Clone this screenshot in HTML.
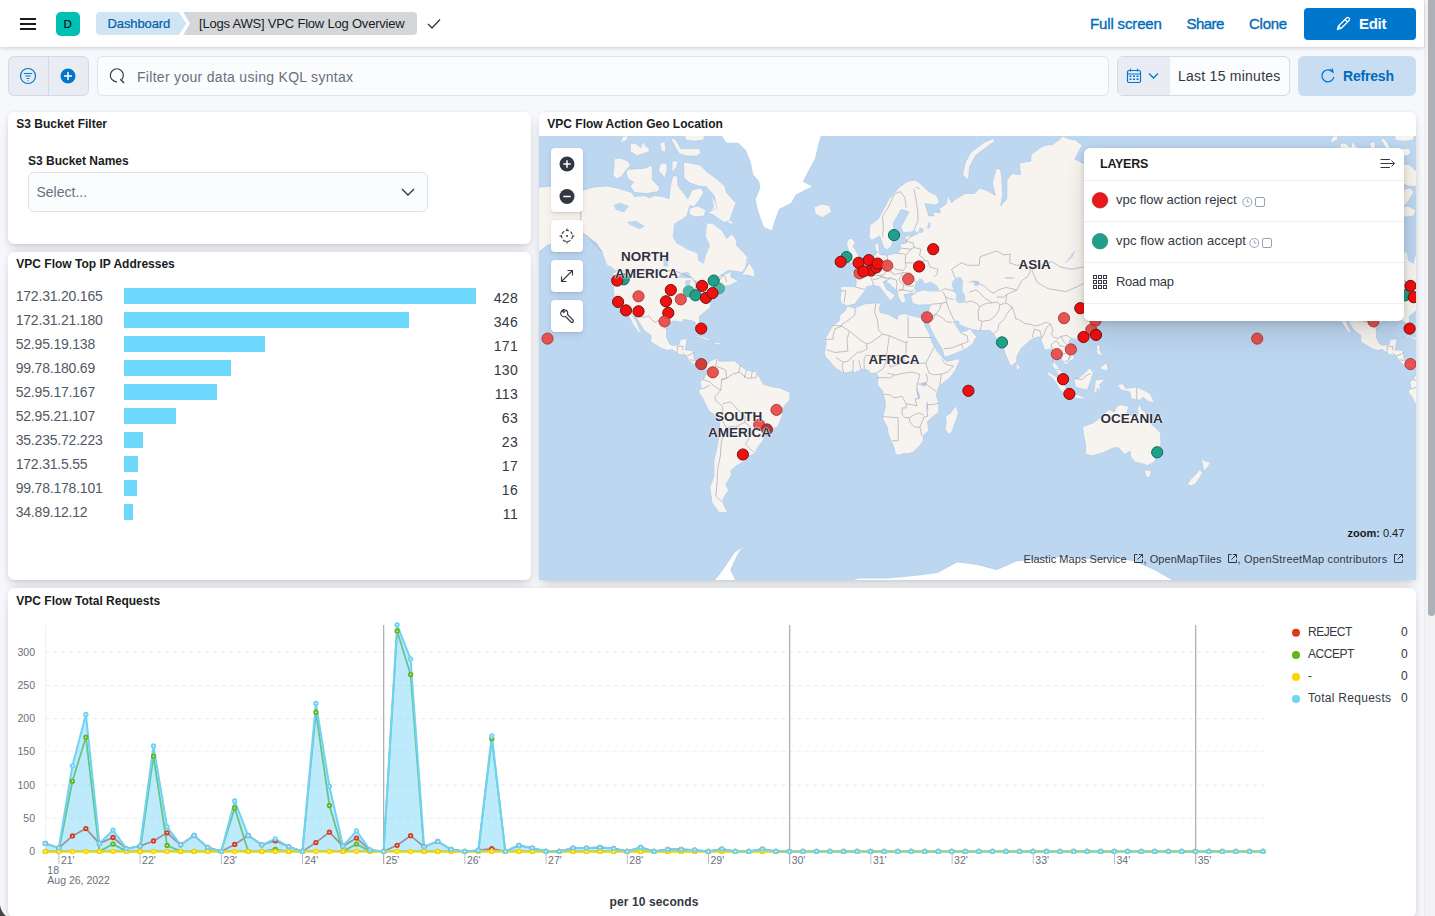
<!DOCTYPE html>
<html><head><meta charset="utf-8">
<style>
*{box-sizing:border-box;margin:0;padding:0}
html,body{width:1435px;height:916px;overflow:hidden;background:#f7f8fc;font-family:"Liberation Sans",sans-serif;color:#343741}
.abs{position:absolute}
.t{position:absolute;white-space:nowrap;line-height:1}
#hdr{position:absolute;left:0;top:0;width:1424px;height:47px;background:#fff;box-shadow:0 1px 3px rgba(0,0,0,.12),0 2px 6px rgba(0,0,0,.06);z-index:5}
.panel{position:absolute;background:#fff;border-radius:6px;box-shadow:0 0.9px 4px -1px rgba(0,0,0,.08),0 2.6px 8px -1px rgba(0,0,0,.06),0 5.7px 12px -1px rgba(0,0,0,.05),0 15px 15px -1px rgba(0,0,0,.04)}
.ptitle{position:absolute;left:8.3px;top:6.3px;font-size:12px;font-weight:700;color:#1a1c21;white-space:nowrap;line-height:1}
.btn{position:absolute;background:#fff;border-radius:4px;box-shadow:0 0.7px 1.4px rgba(0,0,0,.07),0 1.9px 4px rgba(0,0,0,.05),0 4.5px 10px rgba(0,0,0,.05)}
#scroll{position:absolute;left:1424px;top:0;width:11px;height:916px;background:#f3f3f5;border-left:1px solid #ececef}
#thumb{position:absolute;left:1428px;top:0;width:7px;height:616px;background:#abb0b9;border-radius:0 0 4px 4px}
</style></head><body>

<!-- ================= HEADER ================= -->
<div id="hdr">
  <!-- hamburger -->
  <div class="abs" style="left:20px;top:17.8px;width:16px;height:2.1px;background:#1a1c21"></div>
  <div class="abs" style="left:20px;top:22.9px;width:16px;height:2.1px;background:#1a1c21"></div>
  <div class="abs" style="left:20px;top:27.9px;width:16px;height:2.1px;background:#1a1c21"></div>
  <!-- avatar -->
  <div class="abs" style="left:56px;top:12px;width:24px;height:24px;border-radius:5px;background:#00bfb3"></div>
  <div class="t" style="left:63.6px;top:18.3px;font-size:11.6px;color:#000">D</div>
  <!-- breadcrumbs -->
  <svg class="abs" style="left:96px;top:12px" width="330" height="24">
    <path d="M4,0 H378 A4,4 0 0 1 382,4" fill="none"/>
    <path d="M87.2,0 H317 A4,4 0 0 1 321,4 V19 A4,4 0 0 1 317,23 H87.2 L94,11.5 Z" fill="#d4d6da"/>
    <path d="M4,0 H82.8 L90.4,11.5 L82.8,23 H4 A4,4 0 0 1 0,19 V4 A4,4 0 0 1 4,0 Z" fill="#cfe4f5"/>
  </svg>
  <div class="t" style="left:107.5px;top:17px;font-size:13px;color:#0061a6;letter-spacing:-0.1px;-webkit-text-stroke:0.2px #0061a6">Dashboard</div>
  <div class="t" style="left:199px;top:16.5px;font-size:13px;color:#1a1c21;letter-spacing:-0.2px">[Logs AWS] VPC Flow Log Overview</div>
  <svg class="abs" style="left:427px;top:18px" width="14" height="12"><path d="M1,6 L5,10 L13,1.5" fill="none" stroke="#343741" stroke-width="1.3"/></svg>
  <!-- right links -->
  <div class="t" style="left:1090px;top:15.8px;font-size:15px;color:#006bb8;letter-spacing:-0.15px;-webkit-text-stroke:0.35px #006bb8">Full screen</div>
  <div class="t" style="left:1186.5px;top:15.8px;font-size:15px;color:#006bb8;letter-spacing:-0.55px;-webkit-text-stroke:0.35px #006bb8">Share</div>
  <div class="t" style="left:1249px;top:15.8px;font-size:15px;color:#006bb8;letter-spacing:-0.25px;-webkit-text-stroke:0.35px #006bb8">Clone</div>
  <div class="abs" style="left:1304px;top:8px;width:112px;height:32px;border-radius:4px;background:#0077cc"></div>
  <svg class="abs" style="left:1335px;top:16px" width="16" height="16"><path d="M2.5,13.5 L3.5,10 L11.5,2 A1.6,1.6 0 0 1 14,4.5 L6,12.5 Z M10,3.5 L12.5,6 M4,10.5 L5.5,12" fill="none" stroke="#fff" stroke-width="1.3" stroke-linejoin="round"/></svg>
  <div class="t" style="left:1359px;top:15.8px;font-size:15px;color:#fff;font-weight:700;letter-spacing:-0.3px">Edit</div>
</div>

<!-- ================= QUERY BAR ================= -->
<div class="abs" style="left:8px;top:56px;width:81px;height:40px;border-radius:6px;background:#e9edf3;border:1px solid #d3dae6"></div>
<div class="abs" style="left:48px;top:56px;width:1px;height:40px;background:#d3dae6"></div>
<svg class="abs" style="left:19px;top:67px" width="18" height="18"><circle cx="9" cy="9" r="7.5" fill="none" stroke="#0077cc" stroke-width="1.2"/><path d="M4.8,6.5 H13.2 M6.2,9 H11.8 M7.6,11.5 H10.4 M8.6,13.6 H9.4" stroke="#0077cc" stroke-width="1.2"/></svg>
<svg class="abs" style="left:60px;top:68px" width="16" height="16"><circle cx="8" cy="8" r="7.5" fill="#0077cc"/><path d="M8,4 V12 M4,8 H12" stroke="#fff" stroke-width="1.5"/></svg>
<div class="abs" style="left:97px;top:56px;width:1012px;height:40px;border-radius:6px;background:#fbfcfd;border:1px solid #dfe3ea"></div>
<svg class="abs" style="left:108px;top:67px" width="18" height="18"><path d="M13.8,12.5 A6.5,6.5 0 1 0 9,14.8" fill="none" stroke="#343741" stroke-width="1.2"/><path d="M12.3,12.3 L16,16" stroke="#343741" stroke-width="1.3"/></svg>
<div class="t" style="left:137px;top:70px;font-size:14px;color:#69707d;letter-spacing:0.3px">Filter your data using KQL syntax</div>
<!-- date picker -->
<div class="abs" style="left:1117px;top:56px;width:173px;height:40px;border-radius:6px;background:#fbfcfd;border:1px solid #d3dae6;overflow:hidden"><div class="abs" style="left:0;top:0;width:52px;height:40px;background:#e9edf3"></div></div>
<svg class="abs" style="left:1126px;top:68px" width="16" height="16"><rect x="1.5" y="2.5" width="13" height="12" rx="1.5" fill="none" stroke="#0077cc" stroke-width="1.2"/><path d="M1.5,6 H14.5 M4.5,0.8 V3.5 M11.5,0.8 V3.5" stroke="#0077cc" stroke-width="1.2"/><g fill="#0077cc"><rect x="3.5" y="7.5" width="2" height="1.5"/><rect x="7" y="7.5" width="2" height="1.5"/><rect x="10.5" y="7.5" width="2" height="1.5"/><rect x="3.5" y="10.5" width="2" height="1.5"/><rect x="7" y="10.5" width="2" height="1.5"/><rect x="10.5" y="10.5" width="2" height="1.5"/></g></svg>
<svg class="abs" style="left:1148px;top:72px" width="12" height="8"><path d="M1,1.5 L5.5,6 L10,1.5" fill="none" stroke="#0077cc" stroke-width="1.3"/></svg>
<div class="t" style="left:1178px;top:69.2px;font-size:14px;color:#343741;letter-spacing:0.25px">Last 15 minutes</div>
<div class="abs" style="left:1298px;top:56px;width:118px;height:40px;border-radius:6px;background:#c8ddf2"></div>
<svg class="abs" style="left:1320px;top:68px" width="16" height="16"><path d="M12.5,4 A6,6 0 1 0 13.8,9" fill="none" stroke="#0077cc" stroke-width="1.3"/><path d="M9.5,1.5 L13,4 L12,0.5" fill="none" stroke="#0077cc" stroke-width="1.3"/></svg>
<div class="t" style="left:1343px;top:69.2px;font-size:14px;color:#006bb8;font-weight:700;letter-spacing:-0.2px">Refresh</div>

<!-- ================= S3 PANEL ================= -->
<div class="panel" style="left:8px;top:112px;width:523px;height:132px">
  <div class="ptitle">S3 Bucket Filter</div>
  <div class="t" style="left:20px;top:42.5px;font-size:12px;font-weight:700;color:#1a1c21">S3 Bucket Names</div>
  <div class="abs" style="left:20px;top:60px;width:400px;height:40px;border-radius:6px;background:#fbfcfd;border:1px solid #dfe3ea"></div>
  <div class="t" style="left:28.5px;top:73px;font-size:14px;color:#69707d">Select...</div>
  <svg class="abs" style="left:393px;top:76px" width="14" height="8"><path d="M1,1 L7,7 L13,1" fill="none" stroke="#343741" stroke-width="1.4"/></svg>
</div>

<!-- ================= IP PANEL ================= -->
<div class="panel" style="left:8px;top:252px;width:523px;height:328px">
  <div class="ptitle">VPC Flow Top IP Addresses</div>
  <div class="t" style="left:7.7px;top:36.85px;font-size:14px;color:#535966;letter-spacing:-0.2px">172.31.20.165</div>
<div class="abs" style="left:116px;top:36.20px;width:352.0px;height:15.7px;background:#6dd7fc"></div>
<div class="t" style="right:12.8px;top:39.15px;font-size:14px;color:#343741;letter-spacing:0.4px">428</div>
<div class="t" style="left:7.7px;top:60.85px;font-size:14px;color:#535966;letter-spacing:-0.2px">172.31.21.180</div>
<div class="abs" style="left:116px;top:60.20px;width:284.6px;height:15.7px;background:#6dd7fc"></div>
<div class="t" style="right:12.8px;top:63.15px;font-size:14px;color:#343741;letter-spacing:0.4px">346</div>
<div class="t" style="left:7.7px;top:84.85px;font-size:14px;color:#535966;letter-spacing:-0.2px">52.95.19.138</div>
<div class="abs" style="left:116px;top:84.20px;width:140.6px;height:15.7px;background:#6dd7fc"></div>
<div class="t" style="right:12.8px;top:87.15px;font-size:14px;color:#343741;letter-spacing:0.4px">171</div>
<div class="t" style="left:7.7px;top:108.85px;font-size:14px;color:#535966;letter-spacing:-0.2px">99.78.180.69</div>
<div class="abs" style="left:116px;top:108.20px;width:106.9px;height:15.7px;background:#6dd7fc"></div>
<div class="t" style="right:12.8px;top:111.15px;font-size:14px;color:#343741;letter-spacing:0.4px">130</div>
<div class="t" style="left:7.7px;top:132.85px;font-size:14px;color:#535966;letter-spacing:-0.2px">52.95.17.167</div>
<div class="abs" style="left:116px;top:132.20px;width:92.9px;height:15.7px;background:#6dd7fc"></div>
<div class="t" style="right:12.8px;top:135.15px;font-size:14px;color:#343741;letter-spacing:0.4px">113</div>
<div class="t" style="left:7.7px;top:156.85px;font-size:14px;color:#535966;letter-spacing:-0.2px">52.95.21.107</div>
<div class="abs" style="left:116px;top:156.20px;width:51.8px;height:15.7px;background:#6dd7fc"></div>
<div class="t" style="right:12.8px;top:159.15px;font-size:14px;color:#343741;letter-spacing:0.4px">63</div>
<div class="t" style="left:7.7px;top:180.85px;font-size:14px;color:#535966;letter-spacing:-0.2px">35.235.72.223</div>
<div class="abs" style="left:116px;top:180.20px;width:18.9px;height:15.7px;background:#6dd7fc"></div>
<div class="t" style="right:12.8px;top:183.15px;font-size:14px;color:#343741;letter-spacing:0.4px">23</div>
<div class="t" style="left:7.7px;top:204.85px;font-size:14px;color:#535966;letter-spacing:-0.2px">172.31.5.55</div>
<div class="abs" style="left:116px;top:204.20px;width:14.0px;height:15.7px;background:#6dd7fc"></div>
<div class="t" style="right:12.8px;top:207.15px;font-size:14px;color:#343741;letter-spacing:0.4px">17</div>
<div class="t" style="left:7.7px;top:228.85px;font-size:14px;color:#535966;letter-spacing:-0.2px">99.78.178.101</div>
<div class="abs" style="left:116px;top:228.20px;width:13.2px;height:15.7px;background:#6dd7fc"></div>
<div class="t" style="right:12.8px;top:231.15px;font-size:14px;color:#343741;letter-spacing:0.4px">16</div>
<div class="t" style="left:7.7px;top:252.85px;font-size:14px;color:#535966;letter-spacing:-0.2px">34.89.12.12</div>
<div class="abs" style="left:116px;top:252.20px;width:9.0px;height:15.7px;background:#6dd7fc"></div>
<div class="t" style="right:12.8px;top:255.15px;font-size:14px;color:#343741;letter-spacing:0.4px">11</div>
</div>

<!-- ================= MAP PANEL ================= -->
<div class="panel" style="left:539px;top:112px;width:877px;height:468px;overflow:hidden">
  <div class="ptitle">VPC Flow Action Geo Location</div>
</div>
<svg class="abs" style="left:539px;top:136px" width="877" height="444">
  <defs><clipPath id="mc"><path d="M0,0 H877 V444 H0 Z"/></clipPath></defs>
  <g clip-path="url(#mc)">
  <rect width="877" height="444" fill="#bdd7f0"/>
  <path d="M454.0,2.5L444.5,6.8L432.0,16.3L426.5,26.0L423.5,38.7L429.5,44.5L430.5,31.0L436.5,19.5L448.5,10.5L456.0,5.0ZM-59.0,64.0L0.0,51.2L12.0,50.0L42.0,54.8L54.0,51.2L67.3,50.0L79.8,52.3L92.4,56.4L95.5,60.6L105.9,59.6L110.1,61.7L115.4,59.6L123.7,60.6L130.0,62.7L131.5,49.0L134.0,39.7L138.4,40.0L139.0,50.0L142.5,54.4L148.8,62.7L153.0,54.0L161.0,52.0L173.0,60.0L183.0,76.0L197.4,89.9L197.4,109.5L206.2,118.3L209.4,122.6L207.3,130.3L207.4,122.3L210.0,125.5L203.4,136.3L189.6,134.2L179.8,140.7L192.6,135.4L191.6,140.7L199.5,145.0L189.6,149.7L181.8,150.5L181.8,155.4L173.9,158.5L170.9,171.8L160.1,180.5L161.6,194.0L159.1,194.6L156.1,186.2L152.2,184.4L144.3,183.5L143.3,186.2L134.4,184.8L127.9,189.6L127.5,201.5L130.5,207.8L133.4,209.5L140.3,208.5L141.3,203.6L148.2,202.6L146.3,214.0L154.1,214.4L155.5,224.6L163.0,227.4L167.2,229.0L168.9,228.2L170.9,225.2L178.8,221.4L179.8,225.2L185.7,225.2L195.6,224.8L199.5,228.2L207.4,234.1L217.2,236.1L221.2,242.4L224.1,248.0L233.0,250.9L240.9,251.9L250.8,256.5L250.8,263.8L243.9,271.9L242.9,281.1L238.9,290.5L234.6,292.6L225.1,299.1L224.1,304.7L219.2,310.4L215.3,317.4L211.3,319.8L206.4,318.6L207.4,324.6L197.5,329.6L191.6,334.8L192.6,338.8L186.7,348.4L189.6,354.2L183.7,363.3L185.1,369.7L188.7,376.4L179.8,376.4L172.9,366.5L170.9,351.3L174.9,340.1L174.9,324.6L178.8,308.1L181.2,283.1L169.9,274.9L163.0,260.8L159.5,255.9L162.0,250.9L161.0,246.0L164.4,243.0L167.0,239.1L167.4,231.2L166.0,231.2L162.0,231.6L155.1,229.2L150.8,225.2L147.2,220.1L139.4,218.1L133.4,213.6L128.5,214.4L122.6,212.4L111.7,205.7L112.1,199.4L104.8,194.0L97.0,181.0L93.4,179.8L97.9,186.2L102.9,198.9L98.9,195.5L94.0,188.4L89.5,179.3L88.7,177.7L86.1,174.6L82.0,173.2L78.2,165.6L74.9,158.8L74.3,151.9L75.3,142.8L73.9,136.6L77.2,136.3L73.3,131.8L67.4,128.7L63.4,117.3L57.5,106.7L49.6,101.9L43.7,98.0L31.9,94.4L21.0,100.3L16.1,106.7L8.2,109.3L0.3,115.6L-5.0,117.6L-25.3,115.6L-25.3,71.0ZM650.9,64.0L709.9,51.2L721.9,50.0L751.9,54.8L763.9,51.2L777.2,50.0L789.7,52.3L802.3,56.4L805.4,60.6L815.8,59.6L820.0,61.7L825.3,59.6L833.6,60.6L839.9,62.7L841.4,49.0L843.9,39.7L848.3,40.0L848.9,50.0L852.4,54.4L858.7,62.7L862.9,54.0L870.9,52.0L882.9,60.0L892.9,76.0L907.3,89.9L907.3,109.5L916.1,118.3L919.3,122.6L917.2,130.3L917.3,122.3L919.9,125.5L913.3,136.3L899.5,134.2L889.7,140.7L902.5,135.4L901.5,140.7L909.4,145.0L899.5,149.7L891.7,150.5L891.7,155.4L883.8,158.5L880.8,171.8L870.0,180.5L871.5,194.0L869.0,194.6L866.0,186.2L862.1,184.4L854.2,183.5L853.2,186.2L844.3,184.8L837.8,189.6L837.4,201.5L840.4,207.8L843.3,209.5L850.2,208.5L851.2,203.6L858.1,202.6L856.2,214.0L864.0,214.4L865.4,224.6L872.9,227.4L877.1,229.0L878.8,228.2L880.8,225.2L888.7,221.4L889.7,225.2L895.6,225.2L905.5,224.8L909.4,228.2L917.3,234.1L927.1,236.1L931.1,242.4L934.0,248.0L942.9,250.9L950.8,251.9L960.7,256.5L960.7,263.8L953.8,271.9L952.8,281.1L948.8,290.5L944.5,292.6L935.0,299.1L934.0,304.7L929.1,310.4L925.2,317.4L921.2,319.8L916.3,318.6L917.3,324.6L907.4,329.6L901.5,334.8L902.5,338.8L896.6,348.4L899.5,354.2L893.6,363.3L895.0,369.7L898.6,376.4L889.7,376.4L882.8,366.5L880.8,351.3L884.8,340.1L884.8,324.6L888.7,308.1L891.1,283.1L879.8,274.9L872.9,260.8L869.4,255.9L871.9,250.9L870.9,246.0L874.3,243.0L876.9,239.1L877.3,231.2L875.9,231.2L871.9,231.6L865.0,229.2L860.7,225.2L857.1,220.1L849.3,218.1L843.3,213.6L838.4,214.4L832.5,212.4L821.6,205.7L822.0,199.4L814.7,194.0L806.9,181.0L803.3,179.8L807.8,186.2L812.8,198.9L808.8,195.5L803.9,188.4L799.4,179.3L798.6,177.7L796.0,174.6L791.9,173.2L788.1,165.6L784.8,158.8L784.2,151.9L785.2,142.8L783.8,136.6L787.1,136.3L783.2,131.8L777.3,128.7L773.3,117.3L767.4,106.7L759.5,101.9L753.6,98.0L741.8,94.4L730.9,100.3L726.0,106.7L718.1,109.3L710.2,115.6L704.9,117.6L684.6,115.6L684.6,71.0ZM121.6,27.2L127.9,27.2L127.9,34.5L125.8,41.8L119.5,34.5ZM831.5,27.2L837.8,27.2L837.8,34.5L835.7,41.8L829.4,34.5ZM80.9,7.3L84.0,-0.0L89.2,-0.0L88.2,4.2ZM790.8,7.3L793.9,-0.0L799.1,-0.0L798.1,4.2ZM120.6,7.3L125.8,5.2L126.9,15.7L122.7,15.7ZM830.5,7.3L835.7,5.2L836.8,15.7L832.6,15.7ZM88.2,33.4L104.9,32.4L108.0,31.4L111.2,29.3L113.3,31.4L113.3,43.9L120.6,51.2L119.5,55.4L108.0,57.5L95.5,56.4L91.3,50.2L94.4,46.0L89.2,42.9L87.1,37.6ZM798.1,33.4L814.8,32.4L817.9,31.4L821.1,29.3L823.2,31.4L823.2,43.9L830.5,51.2L829.4,55.4L817.9,57.5L805.4,56.4L801.2,50.2L804.3,46.0L799.1,42.9L797.0,37.6ZM75.0,23.0L81.0,22.0L89.0,25.0L91.5,29.0L87.0,34.0L83.0,40.0L78.0,43.0L74.0,39.0L75.0,31.0ZM784.9,23.0L790.9,22.0L798.9,25.0L801.4,29.0L796.9,34.0L792.9,40.0L787.9,43.0L783.9,39.0L784.9,31.0ZM144.6,-6.0L165.5,-6.0L165.5,-0.0L164.5,4.2L155.1,5.2L146.7,4.2ZM854.5,-6.0L875.4,-6.0L875.4,-0.0L874.4,4.2L865.0,5.2L856.6,4.2ZM134.2,2.1L138.4,6.3L141.5,12.5L151.9,12.5L160.3,12.5L161.9,16.7L158.2,19.9L147.8,19.9L140.4,17.8L136.3,11.5L132.1,3.1ZM844.1,2.1L848.3,6.3L851.4,12.5L861.8,12.5L870.2,12.5L871.8,16.7L868.1,19.9L857.7,19.9L850.3,17.8L846.2,11.5L842.0,3.1ZM133.1,25.1L139.4,25.1L137.3,31.4L133.1,36.6ZM843.0,25.1L849.3,25.1L847.2,31.4L843.0,36.6ZM91.3,7.3L96.5,7.3L101.8,11.5L103.9,5.2L107.0,10.5L110.1,11.5L110.1,15.7L103.9,17.8L97.6,19.9L95.5,17.8L91.3,15.7ZM801.2,7.3L806.4,7.3L811.7,11.5L813.8,5.2L816.9,10.5L820.0,11.5L820.0,15.7L813.8,17.8L807.5,19.9L805.4,17.8L801.2,15.7ZM275.1,70.9L283.0,68.0L290.7,69.7L292.5,75.7L283.5,81.7L276.3,78.1ZM301.1,163.1L302.4,167.4L308.0,169.8L315.8,168.1L319.8,162.4L326.1,154.6L327.7,150.5L334.6,149.7L340.5,150.5L344.4,155.9L351.3,164.9L356.3,159.3L347.4,153.2L344.0,145.6L347.0,145.0L358.2,155.1L359.2,161.1L363.2,167.4L367.1,164.9L364.7,158.5L371.1,157.7L377.0,156.7L371.7,160.3L373.6,167.4L379.9,169.1L390.8,168.6L390.4,173.4L387.4,181.0L388.6,185.1L391.8,192.9L396.7,202.6L403.6,214.0L405.2,221.0L408.5,220.5L422.3,215.1L428.2,212.0L433.2,208.2L437.7,200.4L435.1,198.1L430.8,192.2L428.2,194.6L421.3,196.1L418.4,191.8L414.4,185.1L419.4,185.1L420.4,188.4L426.3,191.3L432.2,193.3L441.1,194.6L450.9,194.4L454.9,198.3L457.8,203.6L463.3,207.8L465.7,216.1L470.6,228.2L472.6,230.0L477.5,226.2L477.9,220.1L482.5,212.0L490.4,205.1L495.3,201.9L500.8,200.7L505.7,214.0L512.4,213.0L514.0,221.2L513.6,230.2L517.6,235.1L519.9,240.5L523.9,243.4L525.3,242.1L523.7,237.1L521.3,233.8L518.0,229.2L515.4,226.2L517.2,219.3L521.9,221.8L523.9,225.0L526.8,229.0L530.2,225.6L535.1,222.8L534.7,215.1L529.8,209.9L530.0,204.5L533.4,202.4L537.7,203.6L543.6,200.9L550.5,198.1L555.4,192.9L560.2,184.4L558.4,179.8L556.8,173.4L555.4,167.1L561.4,166.4L553.5,163.6L552.1,162.4L559.4,157.7L559.0,162.4L564.9,160.1L566.7,164.9L569.2,172.2L569.0,173.7L574.8,171.5L575.2,167.4L573.2,163.4L571.2,160.3L575.6,157.2L577.5,153.8L582.1,152.4L587.0,149.7L596.8,136.3L598.6,124.9L596.5,120.7L590.9,119.0L586.4,116.6L596.8,103.7L601.8,99.9L617.6,99.9L624.5,100.3L628.8,91.1L635.3,91.1L629.4,105.6L626.4,115.6L628.8,128.7L632.3,122.3L635.3,117.3L639.2,111.4L641.8,104.9L644.8,98.0L655.0,97.2L659.9,93.2L668.8,86.9L672.8,87.8L672.8,76.7L674.7,75.8L674.7,55.6L655.0,49.9L635.3,51.6L619.5,44.6L595.9,34.6L576.1,44.0L572.2,32.6L556.4,31.2L542.6,26.4L544.2,27.2L535.8,23.0L543.2,9.4L536.9,4.2L530.6,3.1L523.3,-0.0L521.2,3.1L513.9,8.4L505.5,9.4L500.3,12.5L491.9,18.8L491.9,25.1L480.4,27.2L481.5,38.7L473.1,37.6L467.9,43.9L467.9,62.7L461.6,70.0L463.7,58.5L462.7,41.8L461.6,33.4L457.4,32.4L453.3,47.0L456.4,59.6L448.0,54.4L440.7,52.3L435.5,57.5L426.1,57.5L415.6,63.8L412.7,66.9L408.9,59.3L407.3,67.7L404.3,70.0L400.5,72.3L401.2,76.8L393.6,76.1L395.1,79.9L389.8,79.9L385.9,67.7L397.4,69.2L400.5,65.4L397.4,59.3L389.8,55.5L380.6,47.1L376.0,44.0L368.4,45.5L360.7,50.9L350.0,63.1L339.3,83.0L330.9,89.1L330.0,101.1L332.8,104.5L340.5,99.9L341.9,103.0L344.8,111.4L348.0,113.9L352.3,110.3L355.3,99.9L354.3,86.9L362.2,73.4L370.1,75.8L361.8,91.1L364.2,96.4L369.1,96.4L376.0,95.2L379.3,97.6L375.0,99.2L366.1,100.3L367.7,106.7L361.2,108.5L361.2,113.9L358.2,117.6L356.5,117.3L348.4,119.0L341.5,119.0L340.5,117.3L339.3,106.3L335.8,109.3L336.6,113.9L337.1,118.6L333.6,120.7L329.6,122.3L327.7,127.1L324.7,128.4L322.9,131.2L317.2,132.7L316.2,136.0L310.5,136.6L315.5,140.5L317.4,145.0L316.8,150.5L311.9,150.8L304.0,150.0L301.4,151.9L302.4,155.1ZM674.7,75.8L678.7,73.4L690.5,78.1L694.9,70.6L686.6,66.1L674.7,56.1ZM308.5,131.5L322.5,128.1L323.1,123.3L320.2,120.7L317.4,115.9L315.8,112.5L313.9,110.7L316.2,106.7L312.9,102.6L309.9,102.6L307.6,106.7L308.7,112.1L310.3,116.3L313.9,119.0L310.5,121.3L311.5,124.6L309.5,126.5L313.9,128.1ZM308.0,124.9L307.6,120.7L308.9,117.0L305.0,114.9L300.1,118.3L301.1,122.3L299.5,126.2L304.0,126.8ZM308.2,170.3L315.8,172.0L325.7,167.9L339.5,166.9L341.5,167.9L340.1,173.4L341.5,176.5L349.4,178.4L358.2,183.3L359.6,178.9L365.1,177.7L378.8,181.2L383.9,181.2L384.1,184.2L386.4,190.7L390.4,197.7L393.1,206.8L395.7,210.3L397.7,215.1L402.0,219.5L405.0,223.2L407.5,225.4L420.8,222.6L420.4,225.4L416.4,234.1L411.5,241.1L402.6,248.0L399.1,251.9L397.3,259.4L399.7,266.8L399.8,275.9L392.6,281.7L388.4,285.8L389.8,294.8L384.5,299.1L383.9,305.8L379.9,310.4L374.0,316.2L370.1,317.4L363.2,317.8L359.2,319.3L356.1,317.8L355.3,312.7L352.3,304.9L349.4,299.1L348.4,291.6L343.5,282.1L346.6,269.8L345.8,263.4L344.0,257.9L343.1,253.9L338.5,249.0L339.1,240.1L337.9,238.1L336.6,237.1L331.6,237.5L329.6,234.5L326.5,233.4L322.7,233.8L315.8,236.5L311.9,235.7L305.0,237.3L297.1,232.4L293.8,229.2L290.2,224.6L286.7,221.2L285.3,216.7L287.3,206.8L286.3,203.0L290.6,195.1L294.2,189.3L300.5,184.4L300.9,179.3L306.4,174.6ZM417.0,269.8L419.4,276.9L417.4,283.1L414.4,291.6L412.5,296.9L408.9,298.0L406.0,292.6L407.3,286.3L406.6,280.0L411.1,277.6L414.4,272.9ZM477.3,226.6L481.3,231.2L478.7,234.3L477.2,233.2ZM577.1,181.6L579.7,175.8L586.0,175.8L589.6,173.9L595.5,172.2L597.4,170.5L597.8,164.1L599.8,161.1L598.8,156.2L595.9,157.7L595.5,163.6L589.9,167.4L588.0,170.5L582.1,171.0L578.1,173.4L575.7,176.3ZM595.9,155.9L599.4,153.2L606.7,151.1L606.1,148.4L599.4,145.3L598.4,151.1L595.9,153.2ZM599.8,143.6L602.8,141.9L602.2,134.8L604.7,134.8L601.8,119.0L599.8,118.3L599.4,128.7L599.8,140.7ZM556.6,199.4L558.4,194.4L560.4,195.1L558.0,201.7ZM557.4,208.9L561.0,208.9L560.8,214.0L564.3,220.1L558.4,218.5L557.6,216.1ZM560.4,232.2L567.3,226.6L569.2,232.2L567.3,234.9ZM534.7,243.0L536.7,251.5L548.5,253.9L551.5,245.0L554.5,236.1L550.5,232.2L546.6,236.1L542.6,239.7L538.7,242.8ZM507.7,234.9L513.0,238.1L519.9,243.0L525.9,249.6L528.8,257.7L525.9,257.7L520.9,253.9L517.6,248.0L514.0,242.6L509.1,239.1ZM527.2,259.4L529.8,257.9L538.7,258.8L545.6,261.4L545.2,263.2L532.8,261.4L527.8,259.6ZM554.5,256.9L557.4,256.9L558.4,251.9L562.3,254.9L560.4,249.0L566.3,243.0L556.4,244.0L555.4,252.9ZM578.1,248.4L584.0,247.8L587.0,252.5L597.8,251.1L607.3,255.5L611.2,257.9L615.6,266.8L609.7,265.8L603.7,261.2L601.8,263.8L597.8,264.0L591.9,262.6L590.9,255.9L582.1,253.9L580.1,251.3ZM543.6,290.5L544.6,299.1L546.6,308.1L546.6,318.1L552.5,319.8L563.3,317.1L574.2,312.0L579.1,311.5L586.0,318.6L590.9,315.0L591.9,321.2L595.9,325.9L603.7,327.9L608.3,329.6L615.6,325.9L617.9,317.1L621.9,308.1L621.5,296.9L617.2,292.6L608.3,284.2L606.5,275.9L602.8,273.9L600.8,267.2L598.8,271.9L599.0,279.0L594.9,281.1L588.0,276.9L589.6,270.2L581.1,268.8L577.1,270.8L575.2,275.9L569.8,273.5L564.3,279.0L560.8,282.1L554.1,286.9L545.8,290.1ZM605.1,334.0L612.2,334.5L611.6,340.6L607.7,341.5ZM660.3,318.3L664.5,324.4L671.8,326.4L668.8,330.9L664.5,335.6L663.9,329.6L661.9,321.7ZM660.5,333.5L663.5,336.6L660.5,342.3L656.2,348.1L652.1,350.1L648.1,348.4L652.1,342.8L658.0,336.9ZM152.6,201.7L159.1,199.2L167.0,201.7L173.5,205.3L167.0,204.1L160.1,200.7ZM862.5,201.7L869.0,199.2L876.9,201.7L883.4,205.3L876.9,204.1L870.0,200.7ZM174.3,207.6L176.8,206.2L183.7,207.2L179.8,209.1ZM202.9,139.0L210.3,126.8L215.3,134.8L215.9,141.6L209.4,139.3Z" fill="#f7f4f0" stroke="#a9c8ea" stroke-width="0.6" fill-rule="nonzero"/>
  <path d="M377.0,156.7L375.0,151.9L376.4,147.8L378.4,145.9L380.3,142.2L383.9,143.6L385.8,147.8L391.8,145.6L394.3,147.3L397.7,149.2L401.6,155.6L390.8,155.4L384.9,154.6ZM412.5,146.4L416.4,142.2L421.3,140.7L424.3,145.0L423.3,154.6L426.3,159.8L426.1,166.6L419.4,167.4L416.4,163.6L417.4,159.0L413.9,153.2ZM138.2,141.6L144.3,136.3L149.2,136.0L153.2,141.9L148.2,142.2ZM848.1,141.6L854.2,136.3L859.1,136.0L863.1,141.9L858.1,142.2ZM146.7,155.4L148.2,155.4L150.2,149.2L152.2,143.9L146.3,144.2ZM856.6,155.4L858.1,155.4L860.1,149.2L862.1,143.9L856.2,144.2ZM153.2,143.6L162.0,146.4L158.7,151.4L157.1,151.4L155.5,146.4ZM863.1,143.6L871.9,146.4L868.6,151.4L867.0,151.4L865.4,146.4ZM155.1,155.4L164.2,152.4L160.1,153.8ZM865.0,155.4L874.1,152.4L870.0,153.8ZM162.4,151.1L169.5,149.2L168.9,151.1ZM872.3,151.1L879.4,149.2L878.8,151.1ZM524.9,127.1L528.8,123.9L534.7,115.6L536.3,113.9L533.7,120.7L527.8,126.2ZM464.7,142.2L467.7,142.8L473.6,143.0L476.6,141.3L471.6,141.3L466.7,141.0ZM435.1,145.0L440.1,145.0L440.1,149.2L436.1,150.5L434.2,147.8ZM382.9,246.4L386.8,246.0L387.8,248.0L385.8,250.9L382.5,249.9L382.1,248.0ZM377.4,252.9L378.2,252.9L380.9,258.8L381.3,262.8L380.1,262.8L378.0,257.9ZM387.8,264.8L388.8,265.8L389.4,274.5L388.4,274.3L387.0,268.8ZM378.9,97.2L380.9,91.1L384.9,93.2L383.9,96.4ZM387.8,92.4L389.8,85.7L391.8,86.9L390.8,92.4ZM124.6,130.3L129.5,130.3L127.5,119.7L124.6,122.3ZM834.5,130.3L839.4,130.3L837.4,119.7L834.5,122.3ZM150.5,69.1L147.2,80.0L135.2,87.7L133.6,100.8L137.4,107.3L149.4,113.9L158.1,117.2L159.2,124.8L164.7,128.1L166.9,119.3L171.2,109.5L166.9,100.8L168.0,87.7L173.4,87.7L182.1,94.2L187.6,103.0L193.1,98.6L197.4,105.1L221.0,105.0L221.0,79.0L192.0,87.7L184.3,83.3L177.8,78.0L171.0,78.0L175.0,70.0L172.3,54.9L167.0,51.0L162.0,51.0L164.0,57.0L159.0,65.0L155.0,70.0ZM860.4,69.1L857.1,80.0L845.1,87.7L843.5,100.8L847.3,107.3L859.3,113.9L868.0,117.2L869.1,124.8L874.6,128.1L876.8,119.3L881.1,109.5L876.8,100.8L877.9,87.7L883.3,87.7L892.0,94.2L897.5,103.0L903.0,98.6L907.3,105.1L930.9,105.0L930.9,79.0L901.9,87.7L894.2,83.3L887.7,78.0L880.9,78.0L884.9,70.0L882.2,54.9L876.9,51.0L871.9,51.0L873.9,57.0L868.9,65.0L864.9,70.0ZM74.5,69.0L81.0,66.8L90.0,70.0L85.0,76.4L77.0,74.0ZM784.4,69.0L790.9,66.8L799.9,70.0L794.9,76.4L786.9,74.0ZM87.7,86.0L97.0,84.8L105.7,90.0L101.0,93.2L91.0,89.0ZM797.6,86.0L806.9,84.8L815.6,90.0L810.9,93.2L800.9,89.0Z" fill="#bdd7f0"/>
  <path d="M144.6,26.0L161.0,29.0L168.2,36.0L176.6,42.0L186.2,50.4L187.4,56.4L197.0,67.3L194.6,73.3L191.0,84.1L185.0,86.5L173.0,78.1L168.2,76.9L177.8,72.1L175.4,60.0L167.0,50.4L161.0,50.4L151.0,47.0L145.0,42.0ZM854.5,26.0L870.9,29.0L878.1,36.0L886.5,42.0L896.1,50.4L897.3,56.4L906.9,67.3L904.5,73.3L900.9,84.1L894.9,86.5L882.9,78.1L878.1,76.9L887.7,72.1L885.3,60.0L876.9,50.4L870.9,50.4L860.9,47.0L854.9,42.0ZM151.0,72.0L159.0,70.0L167.0,74.0L165.0,80.0L156.0,81.0L150.0,78.0ZM860.9,72.0L868.9,70.0L876.9,74.0L874.9,80.0L865.9,81.0L859.9,78.0Z" fill="#f7f4f0" stroke="#a9c8ea" stroke-width="0.6"/>
  <path d="M182.6,-6.0L182.6,-0.0L187.4,7.2L199.4,7.2L206.6,14.4L211.4,26.4L213.8,38.4L219.8,45.6L221.0,51.6L216.2,63.6L218.6,74.5L224.6,91.3L233.0,94.9L235.5,86.5L240.3,73.3L252.3,67.3L257.1,58.8L273.9,50.4L264.3,45.6L269.1,36.0L276.3,22.8L279.9,7.2L282.3,-0.0L282.3,-6.0ZM-35.2,579.2L-35.2,500.5L4.3,491.4L24.0,483.0L43.7,475.1L83.2,464.2L122.6,460.8L162.0,460.8L181.8,436.4L195.6,416.2L207.4,408.5L201.5,413.9L197.5,421.0L191.6,433.7L201.5,454.2L231.1,500.5L260.6,500.5L280.4,460.8L300.1,448.0L319.8,442.1L349.4,442.1L378.9,439.2L398.7,436.4L418.4,425.9L438.1,428.5L457.8,433.7L477.5,424.9L497.3,423.4L517.0,421.0L536.7,421.0L556.4,423.4L576.1,421.9L595.9,424.9L615.6,433.7L635.3,445.0L655.0,451.1L674.7,500.5L674.7,579.2ZM674.7,579.2L674.7,500.5L714.2,491.4L733.9,483.0L753.6,475.1L793.1,464.2L832.5,460.8L871.9,460.8L891.7,436.4L905.5,416.2L917.3,408.5L911.4,413.9L907.4,421.0L901.5,433.7L911.4,454.2L941.0,500.5L970.5,500.5L990.3,460.8L1010.0,448.0L1029.7,442.1L1059.3,442.1L1088.8,439.2L1108.6,436.4L1128.3,425.9L1148.0,428.5L1167.7,433.7L1187.4,424.9L1207.2,423.4L1226.9,421.0L1246.6,421.0L1266.3,423.4L1286.0,421.9L1305.8,424.9L1325.5,433.7L1345.2,445.0L1364.9,451.1L1384.6,500.5L1384.6,579.2Z" fill="#ffffff" stroke="#a9c8ea" stroke-width="0.6"/>
  <path d="M76.6,134.8L132.1,134.8L132.5,133.6L143.1,137.8L153.2,142.2L157.3,146.4L156.1,154.6L164.0,151.9L168.9,148.6L172.9,146.4L178.8,146.4L181.8,142.2L183.7,139.3L186.1,140.7L187.7,146.4M786.5,134.8L842.0,134.8L842.4,133.6L853.0,137.8L863.1,142.2L867.2,146.4L866.0,154.6L873.9,151.9L878.8,148.6L882.8,146.4L888.7,146.4L891.7,142.2L893.6,139.3L896.0,140.7L897.6,146.4M41.7,52.2L41.7,96.0L49.6,101.1L57.5,110.3L63.4,115.6M751.6,52.2L751.6,96.0L759.5,101.1L767.4,110.3L773.3,115.6M88.9,178.2L93.6,177.7L100.9,181.0L106.4,181.0L109.8,179.8L113.7,184.8L116.7,186.2L119.8,184.4L123.6,189.6L128.1,193.1M798.8,178.2L803.5,177.7L810.8,181.0L816.3,181.0L819.7,179.8L823.6,184.8L826.6,186.2L829.7,184.4L833.5,189.6L838.0,193.1M138.0,217.1L138.4,210.3L143.9,210.3L143.9,214.2M847.9,217.1L848.3,210.3L853.8,210.3L853.8,214.2M143.7,217.3L146.7,219.3M853.6,217.3L856.6,219.3M147.2,220.1L152.2,218.1L155.7,216.1M857.1,220.1L862.1,218.1L865.6,216.1M150.8,223.8L154.7,224.4M860.7,223.8L864.6,224.4M156.1,229.2L156.3,227.0M866.0,229.2L866.2,227.0M177.8,222.6L176.8,230.2L186.7,233.8L187.7,242.1L181.8,243.4M164.0,243.4L170.9,246.0L174.9,249.9L181.8,254.3M873.9,243.4L880.8,246.0L884.8,249.9L891.7,254.3M201.5,229.2L199.5,236.1M207.4,234.5L205.4,242.1M213.3,234.7L212.3,241.5M181.8,254.3L182.7,244.0L187.7,242.1L193.6,238.1L200.5,236.1L208.4,242.3L217.2,241.7L218.0,237.7M161.4,252.7L166.0,251.9L170.9,249.0M871.3,252.7L875.9,251.9L880.8,249.0M181.8,254.3L175.8,260.8L176.8,264.8L180.8,267.8L183.7,270.8L183.7,276.9L182.5,281.1M182.5,281.1L184.7,287.3L187.7,292.2L191.6,290.5L196.5,290.9L205.4,286.3L206.4,281.1L200.9,275.9L191.6,265.8L183.7,267.8M187.7,292.2L184.7,295.9L182.1,308.1L181.4,319.8L178.8,332.2L178.2,345.6L176.8,360.2L183.7,366.5M196.5,290.9L205.4,295.9L212.3,299.1L212.3,294.8L211.3,290.5L205.4,286.3M212.3,299.1L206.4,308.1L214.3,316.2M316.4,172.2L315.8,179.3L309.9,183.9L302.6,188.4L302.6,190.0L294.2,189.1M286.3,203.6L294.2,203.0L294.2,199.4L296.1,192.9L302.6,190.0L310.3,195.1L308.0,203.6L308.9,215.1L296.1,216.5L287.3,213.6M310.3,195.1L322.2,204.7L327.7,207.8L331.6,206.8L343.5,198.3M336.6,167.6L335.6,177.0L338.5,183.9L339.5,194.0L343.5,198.3M369.1,180.3L369.1,201.5L392.8,201.5M343.5,198.3L349.4,199.4L367.1,206.8L367.1,205.7L369.1,205.7M327.7,207.8L328.1,213.0L321.8,216.1L318.8,216.1L308.9,225.2L304.0,226.2L297.1,221.6M325.1,222.8L326.9,219.1L333.6,220.1L339.5,219.5L346.6,218.9L348.4,220.1M348.4,221.2L345.4,230.2L343.5,233.2L337.5,237.1M325.1,233.6L325.1,222.8M322.2,234.1L319.8,224.2M313.9,236.1L314.3,224.2M305.0,237.3L303.0,231.2L304.0,226.2M350.4,199.4L347.4,220.1L350.4,226.6L351.3,231.0L362.2,227.2L364.2,224.2L367.1,216.1L367.1,206.8M363.2,224.2L374.0,227.2L386.8,227.2L389.8,236.9M391.8,217.5L386.8,227.2M391.8,217.5L395.7,209.9M348.4,237.1L356.3,239.1L364.2,237.1L374.0,236.1L380.9,238.5M338.5,241.7L346.4,241.7L351.3,242.1L355.3,239.1M343.8,257.9L351.3,259.0L354.9,261.8L363.2,260.4L367.1,267.8L367.1,271.9L363.2,271.9L363.2,279.0M376.0,262.8L378.0,269.8L373.0,268.8L367.1,267.8M380.9,238.5L378.0,248.6L378.0,254.9L379.9,262.8L376.0,262.8M386.8,236.9L388.8,243.0L386.8,248.0L393.7,252.9L397.1,255.3M378.9,248.0L386.8,248.0M402.6,223.2L406.6,228.2L414.4,230.2L408.5,236.1L402.4,238.1L400.6,249.4M389.8,236.9L394.7,238.9L402.4,238.1M399.7,266.8L394.7,268.4L388.8,268.8L387.8,273.9L388.8,280.0L384.9,281.1L380.9,291.3M363.2,279.0L366.1,281.7L370.1,281.7L375.0,279.0L379.9,276.9L384.9,279.0M359.2,281.7L359.2,290.5L359.2,296.9L359.2,304.7L353.3,304.7M370.1,281.7L371.1,286.3L375.0,290.9L380.9,291.3L382.9,300.2M343.1,280.6L359.2,281.7M302.2,154.8L307.0,154.8L306.2,159.8L305.0,166.9M316.2,151.1L326.1,153.5M324.7,128.7L328.1,132.1L332.4,133.3L336.0,134.8L334.8,139.0L331.6,143.0L333.6,145.6L334.6,149.7M331.6,128.7L333.6,124.6L334.0,121.3M336.7,115.9L339.3,116.3M347.8,119.0L348.6,123.6L349.4,128.7L344.4,130.6L347.0,135.4L345.0,138.7L339.5,139.6L334.8,139.0M349.4,128.7L354.3,130.9L357.3,133.3L364.2,134.5M364.2,134.5L367.1,130.3L366.1,125.5L366.7,119.3L364.6,117.6L358.2,117.6M361.2,112.1L372.0,113.2L375.0,111.4L374.0,106.7L372.0,106.7L367.1,104.9L374.0,99.2M366.7,119.3L372.0,113.2M366.1,126.8L379.9,127.1L382.9,125.5L385.8,124.6L388.8,124.9L390.8,130.9L394.7,132.1L398.7,133.3L398.1,138.4L395.3,140.5M375.0,111.4L381.9,113.2L380.5,119.7L383.9,121.6L385.8,124.6M347.0,135.4L353.3,136.0L353.7,137.8L356.3,138.4L364.2,136.6M352.3,142.2L346.8,142.2L343.5,140.7L339.5,139.6M364.2,136.6L372.0,137.2L375.4,142.2L376.0,145.9L378.4,145.9M364.2,136.6L359.8,143.3L362.2,147.0L364.6,148.6L369.1,150.0L375.0,150.0M359.2,155.1L364.0,153.8L371.1,155.4L375.0,154.6M371.7,156.7L371.1,158.0M346.6,145.0L351.3,142.2L357.3,143.9L358.0,147.8L357.3,151.9L358.0,154.8M360.2,153.2L364.0,153.8L364.6,148.6M333.4,143.9L340.5,142.2L343.5,140.7L346.8,142.2M343.5,101.1L344.4,91.1L343.5,80.4L349.4,71.0L355.3,58.3L361.2,55.6M367.1,72.0L366.1,62.0L361.2,55.6M375.0,52.8L377.0,63.5L378.9,75.8L378.9,84.8L374.6,95.2M376.6,51.1L380.9,52.8M390.8,169.8L393.7,168.1L402.6,167.4L407.5,166.1L406.6,161.1M402.6,167.4L400.6,173.4L396.7,178.2L392.8,180.5L389.8,180.5M388.8,185.1L393.7,183.9L396.7,178.2M396.7,178.2L402.6,181.4L407.9,185.8L413.5,186.2M407.5,166.1L409.5,172.2L411.5,177.0L414.4,182.8L415.0,184.2M404.6,212.6L412.5,212.0L423.3,207.8L429.2,205.7L428.2,200.0L422.3,197.2L421.3,196.8M422.3,207.8L424.3,212.8M401.6,155.6L405.6,152.7L414.4,154.8L416.4,155.9M404.2,155.9L406.6,161.1L410.5,162.6L414.4,163.6M426.1,166.6L432.2,164.9L439.1,168.3L440.5,170.8L439.1,175.8L439.7,184.2L443.0,185.3L441.3,194.6M443.0,185.3L450.9,184.2L456.4,179.6L459.8,174.6L460.8,168.6L466.7,167.4M440.5,170.8L447.0,167.4L453.5,166.9L457.8,165.9L460.8,168.6M454.3,197.9L458.8,194.0L459.8,188.4L465.7,182.8L467.7,178.2L473.2,171.0M473.2,171.0L475.6,178.2L476.6,182.8L479.7,183.5L485.4,187.3L493.3,188.9L494.9,190.0L501.2,188.9L507.1,186.2L511.7,188.0M493.3,201.5L495.3,192.9L501.2,195.1L502.4,202.6M502.4,202.6L505.2,197.7L507.5,191.6L511.7,188.0M511.7,188.0L514.0,195.1L512.1,197.7L515.0,201.5L519.0,202.6L521.9,200.4L527.8,199.4L532.8,202.6M514.0,226.2L515.0,218.1L513.4,213.0L512.1,208.9L516.0,205.3L518.0,204.9M518.0,204.9L520.9,209.9L526.3,210.9L527.8,217.1L521.9,218.1L521.9,222.2M521.9,200.4L524.9,205.7L529.8,210.9L531.8,216.1L529.2,224.4M527.8,217.1L531.8,220.1L528.8,225.2L525.9,225.4M517.6,233.2L520.9,234.1M492.9,134.2L498.2,146.4L509.1,152.7L526.8,155.6L538.7,150.5L545.6,147.0L555.8,140.7L549.9,132.4M492.9,134.2L501.2,129.6L513.0,125.5L520.9,130.9L532.8,133.3L544.6,130.9L549.9,132.4M549.9,132.4L556.4,123.9L566.3,121.6L571.2,132.7L577.1,135.4L585.0,136.9L582.1,146.4L578.5,152.2L577.3,153.5M564.9,160.1L572.2,154.6L577.3,153.5M569.2,165.4L573.2,163.9M416.4,142.2L412.5,133.3L422.3,126.8L428.2,129.3L440.1,129.3L441.1,120.7L457.8,114.9L464.7,119.0L471.2,118.0L470.6,126.8L477.5,129.3L483.5,128.7L491.9,134.5M491.9,134.5L488.4,140.7L482.5,145.0L477.9,154.0L466.7,151.4L459.6,153.8L454.9,157.2L449.9,154.6L446.0,150.5L435.1,145.0L430.2,146.4M430.2,156.4L437.1,153.8L441.1,157.2L446.0,162.4L452.9,166.6M457.8,161.1L464.7,161.1L467.7,158.5L477.9,154.0M467.7,158.5L466.7,166.6L467.7,167.4L473.2,171.0M535.9,242.1L542.6,243.6L546.6,240.1L551.5,237.5M597.8,251.1L597.8,264.0" fill="none" stroke="#a8a8b2" stroke-width="0.7"/>
  <circle cx="84.7" cy="143.3" r="5.6" fill="#20a08b" stroke="#116a5c" stroke-width="1"/>
<circle cx="78.2" cy="144.6" r="5.6" fill="#f0100f" stroke="#6e1414" stroke-width="1"/>
<circle cx="79.1" cy="165.9" r="5.6" fill="#f0100f" stroke="#6e1414" stroke-width="1"/>
<circle cx="87.0" cy="174.4" r="5.6" fill="#f0100f" stroke="#6e1414" stroke-width="1"/>
<circle cx="99.5" cy="160.3" r="5.6" fill="#e94543" stroke="#9a3030" stroke-width="0.8" fill-opacity="0.92"/>
<circle cx="99.5" cy="175.3" r="5.6" fill="#f0100f" stroke="#6e1414" stroke-width="1"/>
<circle cx="131.8" cy="154.0" r="5.6" fill="#f0100f" stroke="#6e1414" stroke-width="1"/>
<circle cx="127.0" cy="165.3" r="5.6" fill="#f0100f" stroke="#6e1414" stroke-width="1"/>
<circle cx="141.8" cy="163.4" r="5.6" fill="#e94543" stroke="#9a3030" stroke-width="0.8" fill-opacity="0.92"/>
<circle cx="129.3" cy="176.9" r="5.6" fill="#f0100f" stroke="#6e1414" stroke-width="1"/>
<circle cx="125.5" cy="185.4" r="5.6" fill="#e94543" stroke="#9a3030" stroke-width="0.8" fill-opacity="0.92"/>
<circle cx="162.2" cy="192.6" r="5.6" fill="#f0100f" stroke="#6e1414" stroke-width="1"/>
<circle cx="149.7" cy="155.3" r="5.6" fill="#4fb3a3" stroke="#3a8f82" stroke-width="0.6"/>
<circle cx="180.0" cy="152.4" r="5.6" fill="#4fb3a3" stroke="#3a8f82" stroke-width="0.6"/>
<circle cx="156.5" cy="159.3" r="5.6" fill="#20a08b" stroke="#116a5c" stroke-width="1"/>
<circle cx="174.7" cy="144.6" r="5.6" fill="#20a08b" stroke="#116a5c" stroke-width="1"/>
<circle cx="163.1" cy="149.9" r="5.6" fill="#f0100f" stroke="#6e1414" stroke-width="1"/>
<circle cx="166.9" cy="161.9" r="5.6" fill="#f0100f" stroke="#6e1414" stroke-width="1"/>
<circle cx="173.5" cy="157.1" r="5.6" fill="#f0100f" stroke="#6e1414" stroke-width="1"/>
<circle cx="8.5" cy="202.6" r="5.6" fill="#e94543" stroke="#9a3030" stroke-width="0.8" fill-opacity="0.92"/>
<circle cx="307.4" cy="121.1" r="5.6" fill="#20a08b" stroke="#116a5c" stroke-width="1"/>
<circle cx="301.7" cy="125.8" r="5.6" fill="#f0100f" stroke="#6e1414" stroke-width="1"/>
<circle cx="320.5" cy="137.4" r="5.6" fill="#e94543" stroke="#9a3030" stroke-width="0.8" fill-opacity="0.92"/>
<circle cx="319.5" cy="126.8" r="5.6" fill="#f0100f" stroke="#6e1414" stroke-width="1"/>
<circle cx="329.8" cy="124.1" r="5.6" fill="#f0100f" stroke="#6e1414" stroke-width="1"/>
<circle cx="331.8" cy="134.5" r="5.6" fill="#f0100f" stroke="#6e1414" stroke-width="1"/>
<circle cx="337.2" cy="131.5" r="5.6" fill="#f0100f" stroke="#6e1414" stroke-width="1"/>
<circle cx="338.7" cy="127.6" r="5.6" fill="#f0100f" stroke="#6e1414" stroke-width="1"/>
<circle cx="324.4" cy="135.4" r="5.6" fill="#f0100f" stroke="#6e1414" stroke-width="1"/>
<circle cx="348.2" cy="129.6" r="5.6" fill="#e94543" stroke="#9a3030" stroke-width="0.8" fill-opacity="0.92"/>
<circle cx="380.1" cy="130.5" r="5.6" fill="#f0100f" stroke="#6e1414" stroke-width="1"/>
<circle cx="394.2" cy="113.2" r="5.6" fill="#f0100f" stroke="#6e1414" stroke-width="1"/>
<circle cx="369.2" cy="143.0" r="5.6" fill="#e94543" stroke="#9a3030" stroke-width="0.8" fill-opacity="0.92"/>
<circle cx="388.0" cy="181.3" r="5.6" fill="#e94543" stroke="#9a3030" stroke-width="0.8" fill-opacity="0.92"/>
<circle cx="355.0" cy="99.1" r="5.6" fill="#20a08b" stroke="#116a5c" stroke-width="1"/>
<circle cx="162.2" cy="228.1" r="5.6" fill="#d23c3a" stroke="#8a2a28" stroke-width="0.9"/>
<circle cx="173.8" cy="236.3" r="5.6" fill="#e94543" stroke="#9a3030" stroke-width="0.8" fill-opacity="0.92"/>
<circle cx="237.5" cy="273.9" r="5.6" fill="#e94543" stroke="#9a3030" stroke-width="0.8" fill-opacity="0.92"/>
<circle cx="220.2" cy="288.7" r="5.6" fill="#e94543" stroke="#9a3030" stroke-width="0.8" fill-opacity="0.92"/>
<circle cx="228.0" cy="293.4" r="5.6" fill="#b8322f" stroke="#6a2a28" stroke-width="0.8"/>
<circle cx="203.9" cy="318.5" r="5.6" fill="#f0100f" stroke="#6e1414" stroke-width="1"/>
<circle cx="429.4" cy="254.8" r="5.6" fill="#f0100f" stroke="#6e1414" stroke-width="1"/>
<circle cx="865.9" cy="159.3" r="5.6" fill="#20a08b" stroke="#116a5c" stroke-width="1"/>
<circle cx="871.5" cy="149.9" r="5.6" fill="#f0100f" stroke="#6e1414" stroke-width="1"/>
<circle cx="874.7" cy="161.2" r="5.6" fill="#f0100f" stroke="#6e1414" stroke-width="1"/>
<circle cx="870.6" cy="192.6" r="5.6" fill="#f0100f" stroke="#6e1414" stroke-width="1"/>
<circle cx="718.2" cy="202.6" r="5.6" fill="#e94543" stroke="#9a3030" stroke-width="0.8" fill-opacity="0.92"/>
<circle cx="525.0" cy="182.2" r="5.6" fill="#e94543" stroke="#9a3030" stroke-width="0.8" fill-opacity="0.92"/>
<circle cx="541.3" cy="172.2" r="5.6" fill="#f0100f" stroke="#6e1414" stroke-width="1"/>
<circle cx="556.4" cy="184.7" r="5.6" fill="#e94543" stroke="#9a3030" stroke-width="0.8" fill-opacity="0.92"/>
<circle cx="552.3" cy="193.8" r="5.6" fill="#e94543" stroke="#9a3030" stroke-width="0.8" fill-opacity="0.92"/>
<circle cx="544.5" cy="201.0" r="5.6" fill="#f0100f" stroke="#6e1414" stroke-width="1"/>
<circle cx="557.0" cy="198.9" r="5.6" fill="#f0100f" stroke="#6e1414" stroke-width="1"/>
<circle cx="463.0" cy="206.4" r="5.6" fill="#20a08b" stroke="#116a5c" stroke-width="1"/>
<circle cx="834.5" cy="185.4" r="5.6" fill="#e94543" stroke="#9a3030" stroke-width="0.8" fill-opacity="0.92"/>
<circle cx="517.8" cy="218.1" r="5.6" fill="#e94543" stroke="#9a3030" stroke-width="0.8" fill-opacity="0.92"/>
<circle cx="531.9" cy="213.4" r="5.6" fill="#e94543" stroke="#9a3030" stroke-width="0.8" fill-opacity="0.92"/>
<circle cx="524.1" cy="243.2" r="5.6" fill="#f0100f" stroke="#6e1414" stroke-width="1"/>
<circle cx="530.4" cy="257.9" r="5.6" fill="#f0100f" stroke="#6e1414" stroke-width="1"/>
<circle cx="618.2" cy="316.3" r="5.6" fill="#20a08b" stroke="#116a5c" stroke-width="1"/>
<circle cx="871.5" cy="228.1" r="5.6" fill="#e94543" stroke="#9a3030" stroke-width="0.8" fill-opacity="0.92"/>
  </g>
</svg>
<!-- map labels -->
<div class="t" style="left:621px;top:250px;font-size:13.5px;font-weight:700;color:#2f3140;text-shadow:0 0 1.5px #fff,0 0 1.5px #fff,0 0 1px #fff">NORTH</div>
<div class="t" style="left:615px;top:267px;font-size:13.5px;font-weight:700;color:#2f3140;text-shadow:0 0 1.5px #fff,0 0 1.5px #fff,0 0 1px #fff">AMERICA</div>
<div class="t" style="left:868.5px;top:352.5px;font-size:13.5px;font-weight:700;color:#2f3140;text-shadow:0 0 1.5px #fff,0 0 1.5px #fff,0 0 1px #fff">AFRICA</div>
<div class="t" style="left:715px;top:409.5px;font-size:13.5px;font-weight:700;color:#2f3140;text-shadow:0 0 1.5px #fff,0 0 1.5px #fff,0 0 1px #fff">SOUTH</div>
<div class="t" style="left:708px;top:426px;font-size:13.5px;font-weight:700;color:#2f3140;text-shadow:0 0 1.5px #fff,0 0 1.5px #fff,0 0 1px #fff">AMERICA</div>
<div class="t" style="left:1018.5px;top:257.5px;font-size:13.5px;font-weight:700;color:#2f3140;text-shadow:0 0 1.5px #fff,0 0 1.5px #fff,0 0 1px #fff">ASIA</div>
<div class="t" style="left:1100.5px;top:412px;font-size:13.5px;font-weight:700;color:#2f3140;text-shadow:0 0 1.5px #fff,0 0 1.5px #fff,0 0 1px #fff">OCEANIA</div>
<!-- map controls -->
<div class="btn" style="left:551px;top:148px;width:32px;height:64px"></div>
<svg class="abs" style="left:559px;top:156px" width="16" height="48"><circle cx="8" cy="8" r="7.5" fill="#343741"/><path d="M8,4.3 V11.7 M4.3,8 H11.7" stroke="#fff" stroke-width="1.5"/><circle cx="8" cy="40.5" r="7.5" fill="#343741"/><path d="M4.3,40.5 H11.7" stroke="#fff" stroke-width="1.5"/></svg>
<div class="btn" style="left:551px;top:220px;width:32px;height:32px"></div>
<svg class="abs" style="left:559px;top:228px" width="16" height="16"><circle cx="8" cy="8" r="5.5" fill="none" stroke="#343741" stroke-width="1.1" stroke-dasharray="3.2,1.6"/><circle cx="8" cy="8" r="1" fill="#343741"/><path d="M8,0.5 V3 M8,13 V15.5 M0.5,8 H3 M13,8 H15.5" stroke="#343741" stroke-width="1.1"/></svg>
<div class="btn" style="left:551px;top:260px;width:32px;height:32px"></div>
<svg class="abs" style="left:559px;top:268px" width="16" height="16"><path d="M2.5,13.5 L13.5,2.5 M8.5,2.5 H13.5 V7.5 M2.5,8.5 V13.5 H7.5" fill="none" stroke="#343741" stroke-width="1.1"/></svg>
<div class="btn" style="left:551px;top:300px;width:32px;height:32px"></div>
<svg class="abs" style="left:559px;top:308px" width="16" height="16"><path d="M5.5,1.5 A4,4 0 0 0 2,7 A4,4 0 0 0 6.5,8.5 L12,14 A1.4,1.4 0 0 0 14,12 L8.5,6.5 A4,4 0 0 0 7,2 L5,4.5 L3.5,3.5 Z" fill="none" stroke="#343741" stroke-width="1.1" stroke-linejoin="round"/></svg>
<!-- layers panel -->
<div class="abs" style="left:1084px;top:148px;width:320px;height:173px;background:#fff;border-radius:6px;box-shadow:0 1px 5px rgba(0,0,0,.1),0 3.6px 13px rgba(0,0,0,.07),0 8.4px 23px rgba(0,0,0,.06),0 23px 35px rgba(0,0,0,.05)"></div>
<div class="t" style="left:1100px;top:158px;font-size:12.5px;font-weight:700;color:#1a1c21;letter-spacing:-0.25px">LAYERS</div>
<svg class="abs" style="left:1380px;top:158px" width="16" height="12"><path d="M0.5,1.5 H10 M0.5,5.5 H14.5 M0.5,9.5 H10 M11.5,2.5 L14.5,5.5 L11.5,8.5" fill="none" stroke="#343741" stroke-width="1"/></svg>
<div class="abs" style="left:1084px;top:180px;width:320px;height:1px;background:#eef0f3"></div>
<div class="abs" style="left:1084px;top:221px;width:320px;height:1px;background:#eef0f3"></div>
<div class="abs" style="left:1084px;top:262px;width:320px;height:1px;background:#eef0f3"></div>
<div class="abs" style="left:1084px;top:303px;width:320px;height:1px;background:#eef0f3"></div>
<svg class="abs" style="left:1091px;top:192px" width="18" height="60"><circle cx="9" cy="8.3" r="7.8" fill="#e7191b" stroke="#b31517" stroke-width="0.6"/><circle cx="9" cy="49.2" r="7.8" fill="#209f8b" stroke="#18806f" stroke-width="0.6"/></svg>
<div class="t" style="left:1116px;top:193px;font-size:13px;color:#343741">vpc flow action reject</div>
<div class="t" style="left:1116px;top:234px;font-size:13px;color:#343741;letter-spacing:0.13px">vpc flow action accept</div>
<svg class="abs" style="left:1242px;top:196px" width="26" height="12"><circle cx="5.3" cy="6" r="4.5" fill="none" stroke="#98a2b3" stroke-width="1"/><path d="M5.3,3.3 V6 H7.5" fill="none" stroke="#98a2b3" stroke-width="1"/><rect x="13.5" y="1.5" width="9" height="9" rx="1.5" fill="none" stroke="#98a2b3" stroke-width="1"/></svg>
<svg class="abs" style="left:1249px;top:237px" width="26" height="12"><circle cx="5.3" cy="6" r="4.5" fill="none" stroke="#98a2b3" stroke-width="1"/><path d="M5.3,3.3 V6 H7.5" fill="none" stroke="#98a2b3" stroke-width="1"/><rect x="13.5" y="1.5" width="9" height="9" rx="1.5" fill="none" stroke="#98a2b3" stroke-width="1"/></svg>
<svg class="abs" style="left:1092px;top:274px" width="16" height="16"><g fill="none" stroke="#343741" stroke-width="1"><rect x="1.5" y="1.5" width="3" height="3"/><rect x="6.5" y="1.5" width="3" height="3"/><rect x="11.5" y="1.5" width="3" height="3"/><rect x="1.5" y="6.5" width="3" height="3"/><rect x="6.5" y="6.5" width="3" height="3"/><rect x="11.5" y="6.5" width="3" height="3"/><rect x="1.5" y="11.5" width="3" height="3"/><rect x="6.5" y="11.5" width="3" height="3"/><rect x="11.5" y="11.5" width="3" height="3"/></g></svg>
<div class="t" style="left:1116px;top:275px;font-size:13px;color:#343741;letter-spacing:-0.3px">Road map</div>
<!-- zoom + attribution -->
<div class="t" style="left:1347.5px;top:528px;font-size:11px;color:#1a1c21"><b>zoom:</b> 0.47</div>
<div class="t" style="left:1023.5px;top:553.5px;font-size:11px;color:#343741;letter-spacing:0.05px">Elastic Maps Service</div><svg class="abs" style="left:1133px;top:553px" width="11" height="11"><path d="M4.5,1.5 H1.5 V9.5 H9.5 V6.5 M6,1.5 H9.5 V5 M9.5,1.5 L4.5,6.5" fill="none" stroke="#343741" stroke-width="1"/></svg><div class="t" style="left:1143.5px;top:553.5px;font-size:11px;color:#343741;letter-spacing:0.05px">, OpenMapTiles</div><svg class="abs" style="left:1227px;top:553px" width="11" height="11"><path d="M4.5,1.5 H1.5 V9.5 H9.5 V6.5 M6,1.5 H9.5 V5 M9.5,1.5 L4.5,6.5" fill="none" stroke="#343741" stroke-width="1"/></svg><div class="t" style="left:1237.5px;top:553.5px;font-size:11px;color:#343741;letter-spacing:0.2px">, OpenStreetMap contributors</div><svg class="abs" style="left:1393px;top:553px" width="11" height="11"><path d="M4.5,1.5 H1.5 V9.5 H9.5 V6.5 M6,1.5 H9.5 V5 M9.5,1.5 L4.5,6.5" fill="none" stroke="#343741" stroke-width="1"/></svg>

<!-- ================= CHART PANEL ================= -->
<div class="panel" style="left:8px;top:588px;width:1408px;height:329px">
  <div class="ptitle" style="top:6.5px">VPC Flow Total Requests</div>
</div>

<svg width="1435" height="916" style="position:absolute;left:0;top:0">
 <g stroke="#e9ebee" stroke-width="1" stroke-dasharray="4,4">
  <line x1="45" y1="818.2" x2="1265" y2="818.2"/><line x1="45" y1="785.0" x2="1265" y2="785.0"/><line x1="45" y1="751.8" x2="1265" y2="751.8"/><line x1="45" y1="718.7" x2="1265" y2="718.7"/><line x1="45" y1="685.5" x2="1265" y2="685.5"/><line x1="45" y1="652.3" x2="1265" y2="652.3"/>
 </g>
 <line x1="45.5" y1="625" x2="45.5" y2="852" stroke="#eef0f3" stroke-width="1"/>
 <g stroke="#b9bcc3" stroke-width="1">
  <line x1="58.9" y1="854" x2="58.9" y2="864"/><line x1="140.1" y1="854" x2="140.1" y2="864"/><line x1="221.3" y1="854" x2="221.3" y2="864"/><line x1="302.5" y1="854" x2="302.5" y2="864"/><line x1="464.9" y1="854" x2="464.9" y2="864"/><line x1="546.1" y1="854" x2="546.1" y2="864"/><line x1="627.3" y1="854" x2="627.3" y2="864"/><line x1="708.5" y1="854" x2="708.5" y2="864"/><line x1="870.9" y1="854" x2="870.9" y2="864"/><line x1="952.1" y1="854" x2="952.1" y2="864"/><line x1="1033.3" y1="854" x2="1033.3" y2="864"/><line x1="1114.5" y1="854" x2="1114.5" y2="864"/>
 </g>
 <g stroke="#a3a4a8" stroke-width="1.1">
  <line x1="383.7" y1="625" x2="383.7" y2="864"/><line x1="789.7" y1="625" x2="789.7" y2="864"/><line x1="1195.7" y1="625" x2="1195.7" y2="864"/>
 </g>
 <path d="M45.3,843.4L58.8,848.1L72.4,835.9L85.9,828.6L99.4,843.4L113.0,837.5L126.5,848.7L140.0,846.1L153.5,841.0L167.1,832.8L180.6,844.8L194.1,835.5L207.7,847.4L221.2,851.4L234.7,844.4L248.2,835.5L261.8,844.8L275.3,840.8L288.8,846.8L302.4,851.4L315.9,842.6L329.4,832.2L343.0,846.1L356.5,838.1L370.0,850.1L383.6,851.4L397.1,845.3L410.6,835.7L424.1,846.8L437.7,841.4L451.2,849.4L464.7,851.4L478.3,850.4L491.8,848.6L505.3,851.4L518.9,845.4L532.4,848.1L545.9,851.4L559.4,851.4L573.0,848.1L586.5,848.1L600.0,847.4L613.6,848.4L627.1,851.4L640.6,847.4L654.1,851.4L667.7,849.4L681.2,849.4L694.7,850.1L708.3,851.4L721.8,849.1L735.3,851.4L748.9,851.4L762.4,849.1L775.9,851.4L789.4,851.4L803.0,851.4L816.5,851.4L830.0,851.4L843.6,851.4L857.1,851.4L870.6,851.4L884.2,851.4L897.7,851.4L911.2,851.4L924.8,851.4L938.3,851.4L951.8,851.4L965.3,851.4L978.9,851.4L992.4,851.4L1005.9,851.4L1019.5,851.4L1033.0,851.4L1046.5,851.4L1060.0,851.4L1073.6,851.4L1087.1,851.4L1100.6,851.4L1114.2,851.4L1127.7,851.4L1141.2,851.4L1154.8,851.4L1168.3,851.4L1181.8,851.4L1195.3,851.4L1208.9,851.4L1222.4,851.4L1235.9,851.4L1249.5,851.4L1263.0,851.4" fill="none" stroke="#bd5a4a" stroke-width="1.7"/>
 <path d="M45.3,851.4L58.8,851.4L72.4,781.3L85.9,737.2L99.4,851.4L113.0,844.1L126.5,851.4L140.0,851.4L153.5,756.2L167.1,845.4L180.6,851.4L194.1,851.4L207.7,851.4L221.2,851.4L234.7,807.9L248.2,851.4L261.8,851.4L275.3,849.4L288.8,851.4L302.4,851.4L315.9,712.2L329.4,805.5L343.0,851.4L356.5,844.1L370.0,851.4L383.6,851.4L397.1,630.9L410.6,674.6L424.1,851.4L437.7,851.4L451.2,851.4L464.7,851.4L478.3,851.4L491.8,738.7L505.3,851.4L518.9,851.4L532.4,851.4L545.9,851.4L559.4,851.4L573.0,851.4L586.5,851.4L600.0,851.4L613.6,851.4L627.1,851.4L640.6,851.4L654.1,851.4L667.7,851.4L681.2,851.4L694.7,851.4L708.3,851.4L721.8,851.4L735.3,851.4L748.9,851.4L762.4,851.4L775.9,851.4L789.4,851.4L803.0,851.4L816.5,851.4L830.0,851.4L843.6,851.4L857.1,851.4L870.6,851.4L884.2,851.4L897.7,851.4L911.2,851.4L924.8,851.4L938.3,851.4L951.8,851.4L965.3,851.4L978.9,851.4L992.4,851.4L1005.9,851.4L1019.5,851.4L1033.0,851.4L1046.5,851.4L1060.0,851.4L1073.6,851.4L1087.1,851.4L1100.6,851.4L1114.2,851.4L1127.7,851.4L1141.2,851.4L1154.8,851.4L1168.3,851.4L1181.8,851.4L1195.3,851.4L1208.9,851.4L1222.4,851.4L1235.9,851.4L1249.5,851.4L1263.0,851.4" fill="none" stroke="#62b82e" stroke-width="1.8"/>
 <path d="M45.3,851.4L58.8,851.4L72.4,851.4L85.9,851.4L99.4,851.4L113.0,851.4L126.5,851.4L140.0,851.4L153.5,851.4L167.1,851.4L180.6,851.4L194.1,851.4L207.7,851.4L221.2,851.4L234.7,851.4L248.2,851.4L261.8,851.4L275.3,851.4L288.8,851.4L302.4,851.4L315.9,851.4L329.4,851.4L343.0,851.4L356.5,851.4L370.0,851.4L383.6,851.4L397.1,851.4L410.6,851.4L424.1,851.4L437.7,851.4L451.2,851.4L464.7,851.4L478.3,851.4L491.8,851.4L505.3,851.4L518.9,851.4L532.4,851.4L545.9,851.4L559.4,851.4L573.0,851.4L586.5,851.4L600.0,851.4L613.6,851.4L627.1,851.4L640.6,851.4L654.1,851.4L667.7,851.4L681.2,851.4L694.7,851.4L708.3,851.4L721.8,851.4L735.3,851.4L748.9,851.4L762.4,851.4L775.9,851.4L789.4,851.4L803.0,851.4L816.5,851.4L830.0,851.4L843.6,851.4L857.1,851.4L870.6,851.4L884.2,851.4L897.7,851.4L911.2,851.4L924.8,851.4L938.3,851.4L951.8,851.4L965.3,851.4L978.9,851.4L992.4,851.4L1005.9,851.4L1019.5,851.4L1033.0,851.4L1046.5,851.4L1060.0,851.4L1073.6,851.4L1087.1,851.4L1100.6,851.4L1114.2,851.4L1127.7,851.4L1141.2,851.4L1154.8,851.4L1168.3,851.4L1181.8,851.4L1195.3,851.4L1208.9,851.4L1222.4,851.4L1235.9,851.4L1249.5,851.4L1263.0,851.4" fill="none" stroke="#f5d800" stroke-width="2.6"/>
 <path d="M45.3,843.4L58.8,848.1L72.4,765.8L85.9,714.4L99.4,843.4L113.0,830.2L126.5,848.7L140.0,846.1L153.5,745.9L167.1,826.8L180.6,844.8L194.1,835.5L207.7,847.4L221.2,851.4L234.7,801.0L248.2,835.5L261.8,844.8L275.3,838.8L288.8,846.8L302.4,851.4L315.9,703.4L329.4,786.2L343.0,846.1L356.5,830.8L370.0,850.1L383.6,851.4L397.1,624.8L410.6,658.9L424.1,846.8L437.7,841.4L451.2,849.4L464.7,851.4L478.3,850.4L491.8,735.9L505.3,851.4L518.9,845.4L532.4,848.1L545.9,851.4L559.4,851.4L573.0,848.1L586.5,848.1L600.0,847.4L613.6,848.4L627.1,851.4L640.6,847.4L654.1,851.4L667.7,849.4L681.2,849.4L694.7,850.1L708.3,851.4L721.8,849.1L735.3,851.4L748.9,851.4L762.4,849.1L775.9,851.4L789.4,851.4L803.0,851.4L816.5,851.4L830.0,851.4L843.6,851.4L857.1,851.4L870.6,851.4L884.2,851.4L897.7,851.4L911.2,851.4L924.8,851.4L938.3,851.4L951.8,851.4L965.3,851.4L978.9,851.4L992.4,851.4L1005.9,851.4L1019.5,851.4L1033.0,851.4L1046.5,851.4L1060.0,851.4L1073.6,851.4L1087.1,851.4L1100.6,851.4L1114.2,851.4L1127.7,851.4L1141.2,851.4L1154.8,851.4L1168.3,851.4L1181.8,851.4L1195.3,851.4L1208.9,851.4L1222.4,851.4L1235.9,851.4L1249.5,851.4L1263.0,851.4L1263.0,851.4L45.3,851.4Z" fill="#6fd3f7" fill-opacity="0.45"/>
 <path d="M45.3,843.4L58.8,848.1L72.4,765.8L85.9,714.4L99.4,843.4L113.0,830.2L126.5,848.7L140.0,846.1L153.5,745.9L167.1,826.8L180.6,844.8L194.1,835.5L207.7,847.4L221.2,851.4L234.7,801.0L248.2,835.5L261.8,844.8L275.3,838.8L288.8,846.8L302.4,851.4L315.9,703.4L329.4,786.2L343.0,846.1L356.5,830.8L370.0,850.1L383.6,851.4L397.1,624.8L410.6,658.9L424.1,846.8L437.7,841.4L451.2,849.4L464.7,851.4L478.3,850.4L491.8,735.9L505.3,851.4L518.9,845.4L532.4,848.1L545.9,851.4L559.4,851.4L573.0,848.1L586.5,848.1L600.0,847.4L613.6,848.4L627.1,851.4L640.6,847.4L654.1,851.4L667.7,849.4L681.2,849.4L694.7,850.1L708.3,851.4L721.8,849.1L735.3,851.4L748.9,851.4L762.4,849.1L775.9,851.4L789.4,851.4L803.0,851.4L816.5,851.4L830.0,851.4L843.6,851.4L857.1,851.4L870.6,851.4L884.2,851.4L897.7,851.4L911.2,851.4L924.8,851.4L938.3,851.4L951.8,851.4L965.3,851.4L978.9,851.4L992.4,851.4L1005.9,851.4L1019.5,851.4L1033.0,851.4L1046.5,851.4L1060.0,851.4L1073.6,851.4L1087.1,851.4L1100.6,851.4L1114.2,851.4L1127.7,851.4L1141.2,851.4L1154.8,851.4L1168.3,851.4L1181.8,851.4L1195.3,851.4L1208.9,851.4L1222.4,851.4L1235.9,851.4L1249.5,851.4L1263.0,851.4" fill="none" stroke="#6fd3f7" stroke-width="2"/>
 <circle cx="45.3" cy="843.4" r="1.7" fill="#fff" stroke="#d93b1e" stroke-width="1.9"/><circle cx="58.8" cy="848.1" r="1.7" fill="#fff" stroke="#d93b1e" stroke-width="1.9"/><circle cx="72.4" cy="835.9" r="1.7" fill="#fff" stroke="#d93b1e" stroke-width="1.9"/><circle cx="85.9" cy="828.6" r="1.7" fill="#fff" stroke="#d93b1e" stroke-width="1.9"/><circle cx="99.4" cy="843.4" r="1.7" fill="#fff" stroke="#d93b1e" stroke-width="1.9"/><circle cx="113.0" cy="837.5" r="1.7" fill="#fff" stroke="#d93b1e" stroke-width="1.9"/><circle cx="126.5" cy="848.7" r="1.7" fill="#fff" stroke="#d93b1e" stroke-width="1.9"/><circle cx="140.0" cy="846.1" r="1.7" fill="#fff" stroke="#d93b1e" stroke-width="1.9"/><circle cx="153.5" cy="841.0" r="1.7" fill="#fff" stroke="#d93b1e" stroke-width="1.9"/><circle cx="167.1" cy="832.8" r="1.7" fill="#fff" stroke="#d93b1e" stroke-width="1.9"/><circle cx="180.6" cy="844.8" r="1.7" fill="#fff" stroke="#d93b1e" stroke-width="1.9"/><circle cx="194.1" cy="835.5" r="1.7" fill="#fff" stroke="#d93b1e" stroke-width="1.9"/><circle cx="207.7" cy="847.4" r="1.7" fill="#fff" stroke="#d93b1e" stroke-width="1.9"/><circle cx="221.2" cy="851.4" r="1.7" fill="#fff" stroke="#d93b1e" stroke-width="1.9"/><circle cx="234.7" cy="844.4" r="1.7" fill="#fff" stroke="#d93b1e" stroke-width="1.9"/><circle cx="248.2" cy="835.5" r="1.7" fill="#fff" stroke="#d93b1e" stroke-width="1.9"/><circle cx="261.8" cy="844.8" r="1.7" fill="#fff" stroke="#d93b1e" stroke-width="1.9"/><circle cx="275.3" cy="840.8" r="1.7" fill="#fff" stroke="#d93b1e" stroke-width="1.9"/><circle cx="288.8" cy="846.8" r="1.7" fill="#fff" stroke="#d93b1e" stroke-width="1.9"/><circle cx="302.4" cy="851.4" r="1.7" fill="#fff" stroke="#d93b1e" stroke-width="1.9"/><circle cx="315.9" cy="842.6" r="1.7" fill="#fff" stroke="#d93b1e" stroke-width="1.9"/><circle cx="329.4" cy="832.2" r="1.7" fill="#fff" stroke="#d93b1e" stroke-width="1.9"/><circle cx="343.0" cy="846.1" r="1.7" fill="#fff" stroke="#d93b1e" stroke-width="1.9"/><circle cx="356.5" cy="838.1" r="1.7" fill="#fff" stroke="#d93b1e" stroke-width="1.9"/><circle cx="370.0" cy="850.1" r="1.7" fill="#fff" stroke="#d93b1e" stroke-width="1.9"/><circle cx="383.6" cy="851.4" r="1.7" fill="#fff" stroke="#d93b1e" stroke-width="1.9"/><circle cx="397.1" cy="845.3" r="1.7" fill="#fff" stroke="#d93b1e" stroke-width="1.9"/><circle cx="410.6" cy="835.7" r="1.7" fill="#fff" stroke="#d93b1e" stroke-width="1.9"/><circle cx="424.1" cy="846.8" r="1.7" fill="#fff" stroke="#d93b1e" stroke-width="1.9"/><circle cx="437.7" cy="841.4" r="1.7" fill="#fff" stroke="#d93b1e" stroke-width="1.9"/><circle cx="451.2" cy="849.4" r="1.7" fill="#fff" stroke="#d93b1e" stroke-width="1.9"/><circle cx="464.7" cy="851.4" r="1.7" fill="#fff" stroke="#d93b1e" stroke-width="1.9"/><circle cx="478.3" cy="850.4" r="1.7" fill="#fff" stroke="#d93b1e" stroke-width="1.9"/><circle cx="491.8" cy="848.6" r="1.7" fill="#fff" stroke="#d93b1e" stroke-width="1.9"/><circle cx="505.3" cy="851.4" r="1.7" fill="#fff" stroke="#d93b1e" stroke-width="1.9"/><circle cx="518.9" cy="845.4" r="1.7" fill="#fff" stroke="#d93b1e" stroke-width="1.9"/><circle cx="532.4" cy="848.1" r="1.7" fill="#fff" stroke="#d93b1e" stroke-width="1.9"/><circle cx="545.9" cy="851.4" r="1.7" fill="#fff" stroke="#d93b1e" stroke-width="1.9"/><circle cx="559.4" cy="851.4" r="1.7" fill="#fff" stroke="#d93b1e" stroke-width="1.9"/><circle cx="573.0" cy="848.1" r="1.7" fill="#fff" stroke="#d93b1e" stroke-width="1.9"/><circle cx="586.5" cy="848.1" r="1.7" fill="#fff" stroke="#d93b1e" stroke-width="1.9"/><circle cx="600.0" cy="847.4" r="1.7" fill="#fff" stroke="#d93b1e" stroke-width="1.9"/><circle cx="613.6" cy="848.4" r="1.7" fill="#fff" stroke="#d93b1e" stroke-width="1.9"/><circle cx="627.1" cy="851.4" r="1.7" fill="#fff" stroke="#d93b1e" stroke-width="1.9"/><circle cx="640.6" cy="847.4" r="1.7" fill="#fff" stroke="#d93b1e" stroke-width="1.9"/><circle cx="654.1" cy="851.4" r="1.7" fill="#fff" stroke="#d93b1e" stroke-width="1.9"/><circle cx="667.7" cy="849.4" r="1.7" fill="#fff" stroke="#d93b1e" stroke-width="1.9"/><circle cx="681.2" cy="849.4" r="1.7" fill="#fff" stroke="#d93b1e" stroke-width="1.9"/><circle cx="694.7" cy="850.1" r="1.7" fill="#fff" stroke="#d93b1e" stroke-width="1.9"/><circle cx="708.3" cy="851.4" r="1.7" fill="#fff" stroke="#d93b1e" stroke-width="1.9"/><circle cx="721.8" cy="849.1" r="1.7" fill="#fff" stroke="#d93b1e" stroke-width="1.9"/><circle cx="735.3" cy="851.4" r="1.7" fill="#fff" stroke="#d93b1e" stroke-width="1.9"/><circle cx="748.9" cy="851.4" r="1.7" fill="#fff" stroke="#d93b1e" stroke-width="1.9"/><circle cx="762.4" cy="849.1" r="1.7" fill="#fff" stroke="#d93b1e" stroke-width="1.9"/><circle cx="775.9" cy="851.4" r="1.7" fill="#fff" stroke="#d93b1e" stroke-width="1.9"/><circle cx="789.4" cy="851.4" r="1.7" fill="#fff" stroke="#d93b1e" stroke-width="1.9"/><circle cx="803.0" cy="851.4" r="1.7" fill="#fff" stroke="#d93b1e" stroke-width="1.9"/><circle cx="816.5" cy="851.4" r="1.7" fill="#fff" stroke="#d93b1e" stroke-width="1.9"/><circle cx="830.0" cy="851.4" r="1.7" fill="#fff" stroke="#d93b1e" stroke-width="1.9"/><circle cx="843.6" cy="851.4" r="1.7" fill="#fff" stroke="#d93b1e" stroke-width="1.9"/><circle cx="857.1" cy="851.4" r="1.7" fill="#fff" stroke="#d93b1e" stroke-width="1.9"/><circle cx="870.6" cy="851.4" r="1.7" fill="#fff" stroke="#d93b1e" stroke-width="1.9"/><circle cx="884.2" cy="851.4" r="1.7" fill="#fff" stroke="#d93b1e" stroke-width="1.9"/><circle cx="897.7" cy="851.4" r="1.7" fill="#fff" stroke="#d93b1e" stroke-width="1.9"/><circle cx="911.2" cy="851.4" r="1.7" fill="#fff" stroke="#d93b1e" stroke-width="1.9"/><circle cx="924.8" cy="851.4" r="1.7" fill="#fff" stroke="#d93b1e" stroke-width="1.9"/><circle cx="938.3" cy="851.4" r="1.7" fill="#fff" stroke="#d93b1e" stroke-width="1.9"/><circle cx="951.8" cy="851.4" r="1.7" fill="#fff" stroke="#d93b1e" stroke-width="1.9"/><circle cx="965.3" cy="851.4" r="1.7" fill="#fff" stroke="#d93b1e" stroke-width="1.9"/><circle cx="978.9" cy="851.4" r="1.7" fill="#fff" stroke="#d93b1e" stroke-width="1.9"/><circle cx="992.4" cy="851.4" r="1.7" fill="#fff" stroke="#d93b1e" stroke-width="1.9"/><circle cx="1005.9" cy="851.4" r="1.7" fill="#fff" stroke="#d93b1e" stroke-width="1.9"/><circle cx="1019.5" cy="851.4" r="1.7" fill="#fff" stroke="#d93b1e" stroke-width="1.9"/><circle cx="1033.0" cy="851.4" r="1.7" fill="#fff" stroke="#d93b1e" stroke-width="1.9"/><circle cx="1046.5" cy="851.4" r="1.7" fill="#fff" stroke="#d93b1e" stroke-width="1.9"/><circle cx="1060.0" cy="851.4" r="1.7" fill="#fff" stroke="#d93b1e" stroke-width="1.9"/><circle cx="1073.6" cy="851.4" r="1.7" fill="#fff" stroke="#d93b1e" stroke-width="1.9"/><circle cx="1087.1" cy="851.4" r="1.7" fill="#fff" stroke="#d93b1e" stroke-width="1.9"/><circle cx="1100.6" cy="851.4" r="1.7" fill="#fff" stroke="#d93b1e" stroke-width="1.9"/><circle cx="1114.2" cy="851.4" r="1.7" fill="#fff" stroke="#d93b1e" stroke-width="1.9"/><circle cx="1127.7" cy="851.4" r="1.7" fill="#fff" stroke="#d93b1e" stroke-width="1.9"/><circle cx="1141.2" cy="851.4" r="1.7" fill="#fff" stroke="#d93b1e" stroke-width="1.9"/><circle cx="1154.8" cy="851.4" r="1.7" fill="#fff" stroke="#d93b1e" stroke-width="1.9"/><circle cx="1168.3" cy="851.4" r="1.7" fill="#fff" stroke="#d93b1e" stroke-width="1.9"/><circle cx="1181.8" cy="851.4" r="1.7" fill="#fff" stroke="#d93b1e" stroke-width="1.9"/><circle cx="1195.3" cy="851.4" r="1.7" fill="#fff" stroke="#d93b1e" stroke-width="1.9"/><circle cx="1208.9" cy="851.4" r="1.7" fill="#fff" stroke="#d93b1e" stroke-width="1.9"/><circle cx="1222.4" cy="851.4" r="1.7" fill="#fff" stroke="#d93b1e" stroke-width="1.9"/><circle cx="1235.9" cy="851.4" r="1.7" fill="#fff" stroke="#d93b1e" stroke-width="1.9"/><circle cx="1249.5" cy="851.4" r="1.7" fill="#fff" stroke="#d93b1e" stroke-width="1.9"/><circle cx="1263.0" cy="851.4" r="1.7" fill="#fff" stroke="#d93b1e" stroke-width="1.9"/>
 <circle cx="45.3" cy="851.4" r="1.7" fill="#fff" stroke="#63b51a" stroke-width="1.9"/><circle cx="58.8" cy="851.4" r="1.7" fill="#fff" stroke="#63b51a" stroke-width="1.9"/><circle cx="72.4" cy="781.3" r="1.7" fill="#fff" stroke="#63b51a" stroke-width="1.9"/><circle cx="85.9" cy="737.2" r="1.7" fill="#fff" stroke="#63b51a" stroke-width="1.9"/><circle cx="99.4" cy="851.4" r="1.7" fill="#fff" stroke="#63b51a" stroke-width="1.9"/><circle cx="113.0" cy="844.1" r="1.7" fill="#fff" stroke="#63b51a" stroke-width="1.9"/><circle cx="126.5" cy="851.4" r="1.7" fill="#fff" stroke="#63b51a" stroke-width="1.9"/><circle cx="140.0" cy="851.4" r="1.7" fill="#fff" stroke="#63b51a" stroke-width="1.9"/><circle cx="153.5" cy="756.2" r="1.7" fill="#fff" stroke="#63b51a" stroke-width="1.9"/><circle cx="167.1" cy="845.4" r="1.7" fill="#fff" stroke="#63b51a" stroke-width="1.9"/><circle cx="180.6" cy="851.4" r="1.7" fill="#fff" stroke="#63b51a" stroke-width="1.9"/><circle cx="194.1" cy="851.4" r="1.7" fill="#fff" stroke="#63b51a" stroke-width="1.9"/><circle cx="207.7" cy="851.4" r="1.7" fill="#fff" stroke="#63b51a" stroke-width="1.9"/><circle cx="221.2" cy="851.4" r="1.7" fill="#fff" stroke="#63b51a" stroke-width="1.9"/><circle cx="234.7" cy="807.9" r="1.7" fill="#fff" stroke="#63b51a" stroke-width="1.9"/><circle cx="248.2" cy="851.4" r="1.7" fill="#fff" stroke="#63b51a" stroke-width="1.9"/><circle cx="261.8" cy="851.4" r="1.7" fill="#fff" stroke="#63b51a" stroke-width="1.9"/><circle cx="275.3" cy="849.4" r="1.7" fill="#fff" stroke="#63b51a" stroke-width="1.9"/><circle cx="288.8" cy="851.4" r="1.7" fill="#fff" stroke="#63b51a" stroke-width="1.9"/><circle cx="302.4" cy="851.4" r="1.7" fill="#fff" stroke="#63b51a" stroke-width="1.9"/><circle cx="315.9" cy="712.2" r="1.7" fill="#fff" stroke="#63b51a" stroke-width="1.9"/><circle cx="329.4" cy="805.5" r="1.7" fill="#fff" stroke="#63b51a" stroke-width="1.9"/><circle cx="343.0" cy="851.4" r="1.7" fill="#fff" stroke="#63b51a" stroke-width="1.9"/><circle cx="356.5" cy="844.1" r="1.7" fill="#fff" stroke="#63b51a" stroke-width="1.9"/><circle cx="370.0" cy="851.4" r="1.7" fill="#fff" stroke="#63b51a" stroke-width="1.9"/><circle cx="383.6" cy="851.4" r="1.7" fill="#fff" stroke="#63b51a" stroke-width="1.9"/><circle cx="397.1" cy="630.9" r="1.7" fill="#fff" stroke="#63b51a" stroke-width="1.9"/><circle cx="410.6" cy="674.6" r="1.7" fill="#fff" stroke="#63b51a" stroke-width="1.9"/><circle cx="424.1" cy="851.4" r="1.7" fill="#fff" stroke="#63b51a" stroke-width="1.9"/><circle cx="437.7" cy="851.4" r="1.7" fill="#fff" stroke="#63b51a" stroke-width="1.9"/><circle cx="451.2" cy="851.4" r="1.7" fill="#fff" stroke="#63b51a" stroke-width="1.9"/><circle cx="464.7" cy="851.4" r="1.7" fill="#fff" stroke="#63b51a" stroke-width="1.9"/><circle cx="478.3" cy="851.4" r="1.7" fill="#fff" stroke="#63b51a" stroke-width="1.9"/><circle cx="491.8" cy="738.7" r="1.7" fill="#fff" stroke="#63b51a" stroke-width="1.9"/><circle cx="505.3" cy="851.4" r="1.7" fill="#fff" stroke="#63b51a" stroke-width="1.9"/><circle cx="518.9" cy="851.4" r="1.7" fill="#fff" stroke="#63b51a" stroke-width="1.9"/><circle cx="532.4" cy="851.4" r="1.7" fill="#fff" stroke="#63b51a" stroke-width="1.9"/><circle cx="545.9" cy="851.4" r="1.7" fill="#fff" stroke="#63b51a" stroke-width="1.9"/><circle cx="559.4" cy="851.4" r="1.7" fill="#fff" stroke="#63b51a" stroke-width="1.9"/><circle cx="573.0" cy="851.4" r="1.7" fill="#fff" stroke="#63b51a" stroke-width="1.9"/><circle cx="586.5" cy="851.4" r="1.7" fill="#fff" stroke="#63b51a" stroke-width="1.9"/><circle cx="600.0" cy="851.4" r="1.7" fill="#fff" stroke="#63b51a" stroke-width="1.9"/><circle cx="613.6" cy="851.4" r="1.7" fill="#fff" stroke="#63b51a" stroke-width="1.9"/><circle cx="627.1" cy="851.4" r="1.7" fill="#fff" stroke="#63b51a" stroke-width="1.9"/><circle cx="640.6" cy="851.4" r="1.7" fill="#fff" stroke="#63b51a" stroke-width="1.9"/><circle cx="654.1" cy="851.4" r="1.7" fill="#fff" stroke="#63b51a" stroke-width="1.9"/><circle cx="667.7" cy="851.4" r="1.7" fill="#fff" stroke="#63b51a" stroke-width="1.9"/><circle cx="681.2" cy="851.4" r="1.7" fill="#fff" stroke="#63b51a" stroke-width="1.9"/><circle cx="694.7" cy="851.4" r="1.7" fill="#fff" stroke="#63b51a" stroke-width="1.9"/><circle cx="708.3" cy="851.4" r="1.7" fill="#fff" stroke="#63b51a" stroke-width="1.9"/><circle cx="721.8" cy="851.4" r="1.7" fill="#fff" stroke="#63b51a" stroke-width="1.9"/><circle cx="735.3" cy="851.4" r="1.7" fill="#fff" stroke="#63b51a" stroke-width="1.9"/><circle cx="748.9" cy="851.4" r="1.7" fill="#fff" stroke="#63b51a" stroke-width="1.9"/><circle cx="762.4" cy="851.4" r="1.7" fill="#fff" stroke="#63b51a" stroke-width="1.9"/><circle cx="775.9" cy="851.4" r="1.7" fill="#fff" stroke="#63b51a" stroke-width="1.9"/><circle cx="789.4" cy="851.4" r="1.7" fill="#fff" stroke="#63b51a" stroke-width="1.9"/><circle cx="803.0" cy="851.4" r="1.7" fill="#fff" stroke="#63b51a" stroke-width="1.9"/><circle cx="816.5" cy="851.4" r="1.7" fill="#fff" stroke="#63b51a" stroke-width="1.9"/><circle cx="830.0" cy="851.4" r="1.7" fill="#fff" stroke="#63b51a" stroke-width="1.9"/><circle cx="843.6" cy="851.4" r="1.7" fill="#fff" stroke="#63b51a" stroke-width="1.9"/><circle cx="857.1" cy="851.4" r="1.7" fill="#fff" stroke="#63b51a" stroke-width="1.9"/><circle cx="870.6" cy="851.4" r="1.7" fill="#fff" stroke="#63b51a" stroke-width="1.9"/><circle cx="884.2" cy="851.4" r="1.7" fill="#fff" stroke="#63b51a" stroke-width="1.9"/><circle cx="897.7" cy="851.4" r="1.7" fill="#fff" stroke="#63b51a" stroke-width="1.9"/><circle cx="911.2" cy="851.4" r="1.7" fill="#fff" stroke="#63b51a" stroke-width="1.9"/><circle cx="924.8" cy="851.4" r="1.7" fill="#fff" stroke="#63b51a" stroke-width="1.9"/><circle cx="938.3" cy="851.4" r="1.7" fill="#fff" stroke="#63b51a" stroke-width="1.9"/><circle cx="951.8" cy="851.4" r="1.7" fill="#fff" stroke="#63b51a" stroke-width="1.9"/><circle cx="965.3" cy="851.4" r="1.7" fill="#fff" stroke="#63b51a" stroke-width="1.9"/><circle cx="978.9" cy="851.4" r="1.7" fill="#fff" stroke="#63b51a" stroke-width="1.9"/><circle cx="992.4" cy="851.4" r="1.7" fill="#fff" stroke="#63b51a" stroke-width="1.9"/><circle cx="1005.9" cy="851.4" r="1.7" fill="#fff" stroke="#63b51a" stroke-width="1.9"/><circle cx="1019.5" cy="851.4" r="1.7" fill="#fff" stroke="#63b51a" stroke-width="1.9"/><circle cx="1033.0" cy="851.4" r="1.7" fill="#fff" stroke="#63b51a" stroke-width="1.9"/><circle cx="1046.5" cy="851.4" r="1.7" fill="#fff" stroke="#63b51a" stroke-width="1.9"/><circle cx="1060.0" cy="851.4" r="1.7" fill="#fff" stroke="#63b51a" stroke-width="1.9"/><circle cx="1073.6" cy="851.4" r="1.7" fill="#fff" stroke="#63b51a" stroke-width="1.9"/><circle cx="1087.1" cy="851.4" r="1.7" fill="#fff" stroke="#63b51a" stroke-width="1.9"/><circle cx="1100.6" cy="851.4" r="1.7" fill="#fff" stroke="#63b51a" stroke-width="1.9"/><circle cx="1114.2" cy="851.4" r="1.7" fill="#fff" stroke="#63b51a" stroke-width="1.9"/><circle cx="1127.7" cy="851.4" r="1.7" fill="#fff" stroke="#63b51a" stroke-width="1.9"/><circle cx="1141.2" cy="851.4" r="1.7" fill="#fff" stroke="#63b51a" stroke-width="1.9"/><circle cx="1154.8" cy="851.4" r="1.7" fill="#fff" stroke="#63b51a" stroke-width="1.9"/><circle cx="1168.3" cy="851.4" r="1.7" fill="#fff" stroke="#63b51a" stroke-width="1.9"/><circle cx="1181.8" cy="851.4" r="1.7" fill="#fff" stroke="#63b51a" stroke-width="1.9"/><circle cx="1195.3" cy="851.4" r="1.7" fill="#fff" stroke="#63b51a" stroke-width="1.9"/><circle cx="1208.9" cy="851.4" r="1.7" fill="#fff" stroke="#63b51a" stroke-width="1.9"/><circle cx="1222.4" cy="851.4" r="1.7" fill="#fff" stroke="#63b51a" stroke-width="1.9"/><circle cx="1235.9" cy="851.4" r="1.7" fill="#fff" stroke="#63b51a" stroke-width="1.9"/><circle cx="1249.5" cy="851.4" r="1.7" fill="#fff" stroke="#63b51a" stroke-width="1.9"/><circle cx="1263.0" cy="851.4" r="1.7" fill="#fff" stroke="#63b51a" stroke-width="1.9"/>
 <circle cx="45.3" cy="851.4" r="1.7" fill="#fff" stroke="#fdd600" stroke-width="1.9"/><circle cx="58.8" cy="851.4" r="1.7" fill="#fff" stroke="#fdd600" stroke-width="1.9"/><circle cx="72.4" cy="851.4" r="1.7" fill="#fff" stroke="#fdd600" stroke-width="1.9"/><circle cx="85.9" cy="851.4" r="1.7" fill="#fff" stroke="#fdd600" stroke-width="1.9"/><circle cx="99.4" cy="851.4" r="1.7" fill="#fff" stroke="#fdd600" stroke-width="1.9"/><circle cx="113.0" cy="851.4" r="1.7" fill="#fff" stroke="#fdd600" stroke-width="1.9"/><circle cx="126.5" cy="851.4" r="1.7" fill="#fff" stroke="#fdd600" stroke-width="1.9"/><circle cx="140.0" cy="851.4" r="1.7" fill="#fff" stroke="#fdd600" stroke-width="1.9"/><circle cx="153.5" cy="851.4" r="1.7" fill="#fff" stroke="#fdd600" stroke-width="1.9"/><circle cx="167.1" cy="851.4" r="1.7" fill="#fff" stroke="#fdd600" stroke-width="1.9"/><circle cx="180.6" cy="851.4" r="1.7" fill="#fff" stroke="#fdd600" stroke-width="1.9"/><circle cx="194.1" cy="851.4" r="1.7" fill="#fff" stroke="#fdd600" stroke-width="1.9"/><circle cx="207.7" cy="851.4" r="1.7" fill="#fff" stroke="#fdd600" stroke-width="1.9"/><circle cx="221.2" cy="851.4" r="1.7" fill="#fff" stroke="#fdd600" stroke-width="1.9"/><circle cx="234.7" cy="851.4" r="1.7" fill="#fff" stroke="#fdd600" stroke-width="1.9"/><circle cx="248.2" cy="851.4" r="1.7" fill="#fff" stroke="#fdd600" stroke-width="1.9"/><circle cx="261.8" cy="851.4" r="1.7" fill="#fff" stroke="#fdd600" stroke-width="1.9"/><circle cx="275.3" cy="851.4" r="1.7" fill="#fff" stroke="#fdd600" stroke-width="1.9"/><circle cx="288.8" cy="851.4" r="1.7" fill="#fff" stroke="#fdd600" stroke-width="1.9"/><circle cx="302.4" cy="851.4" r="1.7" fill="#fff" stroke="#fdd600" stroke-width="1.9"/><circle cx="315.9" cy="851.4" r="1.7" fill="#fff" stroke="#fdd600" stroke-width="1.9"/><circle cx="329.4" cy="851.4" r="1.7" fill="#fff" stroke="#fdd600" stroke-width="1.9"/><circle cx="343.0" cy="851.4" r="1.7" fill="#fff" stroke="#fdd600" stroke-width="1.9"/><circle cx="356.5" cy="851.4" r="1.7" fill="#fff" stroke="#fdd600" stroke-width="1.9"/><circle cx="370.0" cy="851.4" r="1.7" fill="#fff" stroke="#fdd600" stroke-width="1.9"/><circle cx="383.6" cy="851.4" r="1.7" fill="#fff" stroke="#fdd600" stroke-width="1.9"/><circle cx="397.1" cy="851.4" r="1.7" fill="#fff" stroke="#fdd600" stroke-width="1.9"/><circle cx="410.6" cy="851.4" r="1.7" fill="#fff" stroke="#fdd600" stroke-width="1.9"/><circle cx="424.1" cy="851.4" r="1.7" fill="#fff" stroke="#fdd600" stroke-width="1.9"/><circle cx="437.7" cy="851.4" r="1.7" fill="#fff" stroke="#fdd600" stroke-width="1.9"/><circle cx="451.2" cy="851.4" r="1.7" fill="#fff" stroke="#fdd600" stroke-width="1.9"/><circle cx="464.7" cy="851.4" r="1.7" fill="#fff" stroke="#fdd600" stroke-width="1.9"/><circle cx="478.3" cy="851.4" r="1.7" fill="#fff" stroke="#fdd600" stroke-width="1.9"/><circle cx="491.8" cy="851.4" r="1.7" fill="#fff" stroke="#fdd600" stroke-width="1.9"/><circle cx="505.3" cy="851.4" r="1.7" fill="#fff" stroke="#fdd600" stroke-width="1.9"/><circle cx="518.9" cy="851.4" r="1.7" fill="#fff" stroke="#fdd600" stroke-width="1.9"/><circle cx="532.4" cy="851.4" r="1.7" fill="#fff" stroke="#fdd600" stroke-width="1.9"/><circle cx="545.9" cy="851.4" r="1.7" fill="#fff" stroke="#fdd600" stroke-width="1.9"/><circle cx="559.4" cy="851.4" r="1.7" fill="#fff" stroke="#fdd600" stroke-width="1.9"/><circle cx="573.0" cy="851.4" r="1.7" fill="#fff" stroke="#fdd600" stroke-width="1.9"/><circle cx="586.5" cy="851.4" r="1.7" fill="#fff" stroke="#fdd600" stroke-width="1.9"/><circle cx="600.0" cy="851.4" r="1.7" fill="#fff" stroke="#fdd600" stroke-width="1.9"/><circle cx="613.6" cy="851.4" r="1.7" fill="#fff" stroke="#fdd600" stroke-width="1.9"/><circle cx="627.1" cy="851.4" r="1.7" fill="#fff" stroke="#fdd600" stroke-width="1.9"/><circle cx="640.6" cy="851.4" r="1.7" fill="#fff" stroke="#fdd600" stroke-width="1.9"/><circle cx="654.1" cy="851.4" r="1.7" fill="#fff" stroke="#fdd600" stroke-width="1.9"/><circle cx="667.7" cy="851.4" r="1.7" fill="#fff" stroke="#fdd600" stroke-width="1.9"/><circle cx="681.2" cy="851.4" r="1.7" fill="#fff" stroke="#fdd600" stroke-width="1.9"/><circle cx="694.7" cy="851.4" r="1.7" fill="#fff" stroke="#fdd600" stroke-width="1.9"/><circle cx="708.3" cy="851.4" r="1.7" fill="#fff" stroke="#fdd600" stroke-width="1.9"/><circle cx="721.8" cy="851.4" r="1.7" fill="#fff" stroke="#fdd600" stroke-width="1.9"/><circle cx="735.3" cy="851.4" r="1.7" fill="#fff" stroke="#fdd600" stroke-width="1.9"/><circle cx="748.9" cy="851.4" r="1.7" fill="#fff" stroke="#fdd600" stroke-width="1.9"/><circle cx="762.4" cy="851.4" r="1.7" fill="#fff" stroke="#fdd600" stroke-width="1.9"/><circle cx="775.9" cy="851.4" r="1.7" fill="#fff" stroke="#fdd600" stroke-width="1.9"/><circle cx="789.4" cy="851.4" r="1.7" fill="#fff" stroke="#fdd600" stroke-width="1.9"/><circle cx="803.0" cy="851.4" r="1.7" fill="#fff" stroke="#fdd600" stroke-width="1.9"/><circle cx="816.5" cy="851.4" r="1.7" fill="#fff" stroke="#fdd600" stroke-width="1.9"/><circle cx="830.0" cy="851.4" r="1.7" fill="#fff" stroke="#fdd600" stroke-width="1.9"/><circle cx="843.6" cy="851.4" r="1.7" fill="#fff" stroke="#fdd600" stroke-width="1.9"/><circle cx="857.1" cy="851.4" r="1.7" fill="#fff" stroke="#fdd600" stroke-width="1.9"/><circle cx="870.6" cy="851.4" r="1.7" fill="#fff" stroke="#fdd600" stroke-width="1.9"/><circle cx="884.2" cy="851.4" r="1.7" fill="#fff" stroke="#fdd600" stroke-width="1.9"/><circle cx="897.7" cy="851.4" r="1.7" fill="#fff" stroke="#fdd600" stroke-width="1.9"/><circle cx="911.2" cy="851.4" r="1.7" fill="#fff" stroke="#fdd600" stroke-width="1.9"/><circle cx="924.8" cy="851.4" r="1.7" fill="#fff" stroke="#fdd600" stroke-width="1.9"/><circle cx="938.3" cy="851.4" r="1.7" fill="#fff" stroke="#fdd600" stroke-width="1.9"/><circle cx="951.8" cy="851.4" r="1.7" fill="#fff" stroke="#fdd600" stroke-width="1.9"/><circle cx="965.3" cy="851.4" r="1.7" fill="#fff" stroke="#fdd600" stroke-width="1.9"/><circle cx="978.9" cy="851.4" r="1.7" fill="#fff" stroke="#fdd600" stroke-width="1.9"/><circle cx="992.4" cy="851.4" r="1.7" fill="#fff" stroke="#fdd600" stroke-width="1.9"/><circle cx="1005.9" cy="851.4" r="1.7" fill="#fff" stroke="#fdd600" stroke-width="1.9"/><circle cx="1019.5" cy="851.4" r="1.7" fill="#fff" stroke="#fdd600" stroke-width="1.9"/><circle cx="1033.0" cy="851.4" r="1.7" fill="#fff" stroke="#fdd600" stroke-width="1.9"/><circle cx="1046.5" cy="851.4" r="1.7" fill="#fff" stroke="#fdd600" stroke-width="1.9"/><circle cx="1060.0" cy="851.4" r="1.7" fill="#fff" stroke="#fdd600" stroke-width="1.9"/><circle cx="1073.6" cy="851.4" r="1.7" fill="#fff" stroke="#fdd600" stroke-width="1.9"/><circle cx="1087.1" cy="851.4" r="1.7" fill="#fff" stroke="#fdd600" stroke-width="1.9"/><circle cx="1100.6" cy="851.4" r="1.7" fill="#fff" stroke="#fdd600" stroke-width="1.9"/><circle cx="1114.2" cy="851.4" r="1.7" fill="#fff" stroke="#fdd600" stroke-width="1.9"/><circle cx="1127.7" cy="851.4" r="1.7" fill="#fff" stroke="#fdd600" stroke-width="1.9"/><circle cx="1141.2" cy="851.4" r="1.7" fill="#fff" stroke="#fdd600" stroke-width="1.9"/><circle cx="1154.8" cy="851.4" r="1.7" fill="#fff" stroke="#fdd600" stroke-width="1.9"/><circle cx="1168.3" cy="851.4" r="1.7" fill="#fff" stroke="#fdd600" stroke-width="1.9"/><circle cx="1181.8" cy="851.4" r="1.7" fill="#fff" stroke="#fdd600" stroke-width="1.9"/><circle cx="1195.3" cy="851.4" r="1.7" fill="#fff" stroke="#fdd600" stroke-width="1.9"/><circle cx="1208.9" cy="851.4" r="1.7" fill="#fff" stroke="#fdd600" stroke-width="1.9"/><circle cx="1222.4" cy="851.4" r="1.7" fill="#fff" stroke="#fdd600" stroke-width="1.9"/><circle cx="1235.9" cy="851.4" r="1.7" fill="#fff" stroke="#fdd600" stroke-width="1.9"/><circle cx="1249.5" cy="851.4" r="1.7" fill="#fff" stroke="#fdd600" stroke-width="1.9"/><circle cx="1263.0" cy="851.4" r="1.7" fill="#fff" stroke="#fdd600" stroke-width="1.9"/>
 <circle cx="45.3" cy="843.4" r="1.7" fill="#fff" stroke="#6fd3f7" stroke-width="1.9"/><circle cx="58.8" cy="848.1" r="1.7" fill="#fff" stroke="#6fd3f7" stroke-width="1.9"/><circle cx="72.4" cy="765.8" r="1.7" fill="#fff" stroke="#6fd3f7" stroke-width="1.9"/><circle cx="85.9" cy="714.4" r="1.7" fill="#fff" stroke="#6fd3f7" stroke-width="1.9"/><circle cx="99.4" cy="843.4" r="1.7" fill="#fff" stroke="#6fd3f7" stroke-width="1.9"/><circle cx="113.0" cy="830.2" r="1.7" fill="#fff" stroke="#6fd3f7" stroke-width="1.9"/><circle cx="126.5" cy="848.7" r="1.7" fill="#fff" stroke="#6fd3f7" stroke-width="1.9"/><circle cx="140.0" cy="846.1" r="1.7" fill="#fff" stroke="#6fd3f7" stroke-width="1.9"/><circle cx="153.5" cy="745.9" r="1.7" fill="#fff" stroke="#6fd3f7" stroke-width="1.9"/><circle cx="167.1" cy="826.8" r="1.7" fill="#fff" stroke="#6fd3f7" stroke-width="1.9"/><circle cx="180.6" cy="844.8" r="1.7" fill="#fff" stroke="#6fd3f7" stroke-width="1.9"/><circle cx="194.1" cy="835.5" r="1.7" fill="#fff" stroke="#6fd3f7" stroke-width="1.9"/><circle cx="207.7" cy="847.4" r="1.7" fill="#fff" stroke="#6fd3f7" stroke-width="1.9"/><circle cx="221.2" cy="851.4" r="1.7" fill="#fff" stroke="#6fd3f7" stroke-width="1.9"/><circle cx="234.7" cy="801.0" r="1.7" fill="#fff" stroke="#6fd3f7" stroke-width="1.9"/><circle cx="248.2" cy="835.5" r="1.7" fill="#fff" stroke="#6fd3f7" stroke-width="1.9"/><circle cx="261.8" cy="844.8" r="1.7" fill="#fff" stroke="#6fd3f7" stroke-width="1.9"/><circle cx="275.3" cy="838.8" r="1.7" fill="#fff" stroke="#6fd3f7" stroke-width="1.9"/><circle cx="288.8" cy="846.8" r="1.7" fill="#fff" stroke="#6fd3f7" stroke-width="1.9"/><circle cx="302.4" cy="851.4" r="1.7" fill="#fff" stroke="#6fd3f7" stroke-width="1.9"/><circle cx="315.9" cy="703.4" r="1.7" fill="#fff" stroke="#6fd3f7" stroke-width="1.9"/><circle cx="329.4" cy="786.2" r="1.7" fill="#fff" stroke="#6fd3f7" stroke-width="1.9"/><circle cx="343.0" cy="846.1" r="1.7" fill="#fff" stroke="#6fd3f7" stroke-width="1.9"/><circle cx="356.5" cy="830.8" r="1.7" fill="#fff" stroke="#6fd3f7" stroke-width="1.9"/><circle cx="370.0" cy="850.1" r="1.7" fill="#fff" stroke="#6fd3f7" stroke-width="1.9"/><circle cx="383.6" cy="851.4" r="1.7" fill="#fff" stroke="#6fd3f7" stroke-width="1.9"/><circle cx="397.1" cy="624.8" r="1.7" fill="#fff" stroke="#6fd3f7" stroke-width="1.9"/><circle cx="410.6" cy="658.9" r="1.7" fill="#fff" stroke="#6fd3f7" stroke-width="1.9"/><circle cx="424.1" cy="846.8" r="1.7" fill="#fff" stroke="#6fd3f7" stroke-width="1.9"/><circle cx="437.7" cy="841.4" r="1.7" fill="#fff" stroke="#6fd3f7" stroke-width="1.9"/><circle cx="451.2" cy="849.4" r="1.7" fill="#fff" stroke="#6fd3f7" stroke-width="1.9"/><circle cx="464.7" cy="851.4" r="1.7" fill="#fff" stroke="#6fd3f7" stroke-width="1.9"/><circle cx="478.3" cy="850.4" r="1.7" fill="#fff" stroke="#6fd3f7" stroke-width="1.9"/><circle cx="491.8" cy="735.9" r="1.7" fill="#fff" stroke="#6fd3f7" stroke-width="1.9"/><circle cx="505.3" cy="851.4" r="1.7" fill="#fff" stroke="#6fd3f7" stroke-width="1.9"/><circle cx="518.9" cy="845.4" r="1.7" fill="#fff" stroke="#6fd3f7" stroke-width="1.9"/><circle cx="532.4" cy="848.1" r="1.7" fill="#fff" stroke="#6fd3f7" stroke-width="1.9"/><circle cx="545.9" cy="851.4" r="1.7" fill="#fff" stroke="#6fd3f7" stroke-width="1.9"/><circle cx="559.4" cy="851.4" r="1.7" fill="#fff" stroke="#6fd3f7" stroke-width="1.9"/><circle cx="573.0" cy="848.1" r="1.7" fill="#fff" stroke="#6fd3f7" stroke-width="1.9"/><circle cx="586.5" cy="848.1" r="1.7" fill="#fff" stroke="#6fd3f7" stroke-width="1.9"/><circle cx="600.0" cy="847.4" r="1.7" fill="#fff" stroke="#6fd3f7" stroke-width="1.9"/><circle cx="613.6" cy="848.4" r="1.7" fill="#fff" stroke="#6fd3f7" stroke-width="1.9"/><circle cx="627.1" cy="851.4" r="1.7" fill="#fff" stroke="#6fd3f7" stroke-width="1.9"/><circle cx="640.6" cy="847.4" r="1.7" fill="#fff" stroke="#6fd3f7" stroke-width="1.9"/><circle cx="654.1" cy="851.4" r="1.7" fill="#fff" stroke="#6fd3f7" stroke-width="1.9"/><circle cx="667.7" cy="849.4" r="1.7" fill="#fff" stroke="#6fd3f7" stroke-width="1.9"/><circle cx="681.2" cy="849.4" r="1.7" fill="#fff" stroke="#6fd3f7" stroke-width="1.9"/><circle cx="694.7" cy="850.1" r="1.7" fill="#fff" stroke="#6fd3f7" stroke-width="1.9"/><circle cx="708.3" cy="851.4" r="1.7" fill="#fff" stroke="#6fd3f7" stroke-width="1.9"/><circle cx="721.8" cy="849.1" r="1.7" fill="#fff" stroke="#6fd3f7" stroke-width="1.9"/><circle cx="735.3" cy="851.4" r="1.7" fill="#fff" stroke="#6fd3f7" stroke-width="1.9"/><circle cx="748.9" cy="851.4" r="1.7" fill="#fff" stroke="#6fd3f7" stroke-width="1.9"/><circle cx="762.4" cy="849.1" r="1.7" fill="#fff" stroke="#6fd3f7" stroke-width="1.9"/><circle cx="775.9" cy="851.4" r="1.7" fill="#fff" stroke="#6fd3f7" stroke-width="1.9"/><circle cx="789.4" cy="851.4" r="1.7" fill="#fff" stroke="#6fd3f7" stroke-width="1.9"/><circle cx="803.0" cy="851.4" r="1.7" fill="#fff" stroke="#6fd3f7" stroke-width="1.9"/><circle cx="816.5" cy="851.4" r="1.7" fill="#fff" stroke="#6fd3f7" stroke-width="1.9"/><circle cx="830.0" cy="851.4" r="1.7" fill="#fff" stroke="#6fd3f7" stroke-width="1.9"/><circle cx="843.6" cy="851.4" r="1.7" fill="#fff" stroke="#6fd3f7" stroke-width="1.9"/><circle cx="857.1" cy="851.4" r="1.7" fill="#fff" stroke="#6fd3f7" stroke-width="1.9"/><circle cx="870.6" cy="851.4" r="1.7" fill="#fff" stroke="#6fd3f7" stroke-width="1.9"/><circle cx="884.2" cy="851.4" r="1.7" fill="#fff" stroke="#6fd3f7" stroke-width="1.9"/><circle cx="897.7" cy="851.4" r="1.7" fill="#fff" stroke="#6fd3f7" stroke-width="1.9"/><circle cx="911.2" cy="851.4" r="1.7" fill="#fff" stroke="#6fd3f7" stroke-width="1.9"/><circle cx="924.8" cy="851.4" r="1.7" fill="#fff" stroke="#6fd3f7" stroke-width="1.9"/><circle cx="938.3" cy="851.4" r="1.7" fill="#fff" stroke="#6fd3f7" stroke-width="1.9"/><circle cx="951.8" cy="851.4" r="1.7" fill="#fff" stroke="#6fd3f7" stroke-width="1.9"/><circle cx="965.3" cy="851.4" r="1.7" fill="#fff" stroke="#6fd3f7" stroke-width="1.9"/><circle cx="978.9" cy="851.4" r="1.7" fill="#fff" stroke="#6fd3f7" stroke-width="1.9"/><circle cx="992.4" cy="851.4" r="1.7" fill="#fff" stroke="#6fd3f7" stroke-width="1.9"/><circle cx="1005.9" cy="851.4" r="1.7" fill="#fff" stroke="#6fd3f7" stroke-width="1.9"/><circle cx="1019.5" cy="851.4" r="1.7" fill="#fff" stroke="#6fd3f7" stroke-width="1.9"/><circle cx="1033.0" cy="851.4" r="1.7" fill="#fff" stroke="#6fd3f7" stroke-width="1.9"/><circle cx="1046.5" cy="851.4" r="1.7" fill="#fff" stroke="#6fd3f7" stroke-width="1.9"/><circle cx="1060.0" cy="851.4" r="1.7" fill="#fff" stroke="#6fd3f7" stroke-width="1.9"/><circle cx="1073.6" cy="851.4" r="1.7" fill="#fff" stroke="#6fd3f7" stroke-width="1.9"/><circle cx="1087.1" cy="851.4" r="1.7" fill="#fff" stroke="#6fd3f7" stroke-width="1.9"/><circle cx="1100.6" cy="851.4" r="1.7" fill="#fff" stroke="#6fd3f7" stroke-width="1.9"/><circle cx="1114.2" cy="851.4" r="1.7" fill="#fff" stroke="#6fd3f7" stroke-width="1.9"/><circle cx="1127.7" cy="851.4" r="1.7" fill="#fff" stroke="#6fd3f7" stroke-width="1.9"/><circle cx="1141.2" cy="851.4" r="1.7" fill="#fff" stroke="#6fd3f7" stroke-width="1.9"/><circle cx="1154.8" cy="851.4" r="1.7" fill="#fff" stroke="#6fd3f7" stroke-width="1.9"/><circle cx="1168.3" cy="851.4" r="1.7" fill="#fff" stroke="#6fd3f7" stroke-width="1.9"/><circle cx="1181.8" cy="851.4" r="1.7" fill="#fff" stroke="#6fd3f7" stroke-width="1.9"/><circle cx="1195.3" cy="851.4" r="1.7" fill="#fff" stroke="#6fd3f7" stroke-width="1.9"/><circle cx="1208.9" cy="851.4" r="1.7" fill="#fff" stroke="#6fd3f7" stroke-width="1.9"/><circle cx="1222.4" cy="851.4" r="1.7" fill="#fff" stroke="#6fd3f7" stroke-width="1.9"/><circle cx="1235.9" cy="851.4" r="1.7" fill="#fff" stroke="#6fd3f7" stroke-width="1.9"/><circle cx="1249.5" cy="851.4" r="1.7" fill="#fff" stroke="#6fd3f7" stroke-width="1.9"/><circle cx="1263.0" cy="851.4" r="1.7" fill="#fff" stroke="#6fd3f7" stroke-width="1.9"/>
</svg>
<div class="t" style="right:1400px;top:845.91px;font-size:10.5px;color:#69707d;text-align:right">0</div>
<div class="t" style="right:1400px;top:812.73px;font-size:10.5px;color:#69707d;text-align:right">50</div>
<div class="t" style="right:1400px;top:779.54px;font-size:10.5px;color:#69707d;text-align:right">100</div>
<div class="t" style="right:1400px;top:746.36px;font-size:10.5px;color:#69707d;text-align:right">150</div>
<div class="t" style="right:1400px;top:713.17px;font-size:10.5px;color:#69707d;text-align:right">200</div>
<div class="t" style="right:1400px;top:679.99px;font-size:10.5px;color:#69707d;text-align:right">250</div>
<div class="t" style="right:1400px;top:646.80px;font-size:10.5px;color:#69707d;text-align:right">300</div>
<div class="t" style="left:60.9px;top:854.71px;font-size:10.5px;color:#69707d">21'</div>
<div class="t" style="left:142.1px;top:854.71px;font-size:10.5px;color:#69707d">22'</div>
<div class="t" style="left:223.3px;top:854.71px;font-size:10.5px;color:#69707d">23'</div>
<div class="t" style="left:304.5px;top:854.71px;font-size:10.5px;color:#69707d">24'</div>
<div class="t" style="left:385.7px;top:854.71px;font-size:10.5px;color:#69707d">25'</div>
<div class="t" style="left:466.9px;top:854.71px;font-size:10.5px;color:#69707d">26'</div>
<div class="t" style="left:548.1px;top:854.71px;font-size:10.5px;color:#69707d">27'</div>
<div class="t" style="left:629.3px;top:854.71px;font-size:10.5px;color:#69707d">28'</div>
<div class="t" style="left:710.5px;top:854.71px;font-size:10.5px;color:#69707d">29'</div>
<div class="t" style="left:791.7px;top:854.71px;font-size:10.5px;color:#69707d">30'</div>
<div class="t" style="left:872.9px;top:854.71px;font-size:10.5px;color:#69707d">31'</div>
<div class="t" style="left:954.1px;top:854.71px;font-size:10.5px;color:#69707d">32'</div>
<div class="t" style="left:1035.3px;top:854.71px;font-size:10.5px;color:#69707d">33'</div>
<div class="t" style="left:1116.5px;top:854.71px;font-size:10.5px;color:#69707d">34'</div>
<div class="t" style="left:1197.7px;top:854.71px;font-size:10.5px;color:#69707d">35'</div>
<div class="t" style="left:47.3px;top:864.81px;font-size:10.5px;color:#69707d">18</div>
<div class="t" style="left:47.3px;top:874.81px;font-size:10.5px;color:#69707d;letter-spacing:0px">Aug 26, 2022</div>
<!-- legend -->
<svg class="abs" style="left:1290px;top:627px" width="12" height="80"><circle cx="6" cy="5.8" r="4" fill="#d93b1e"/><circle cx="6" cy="27.9" r="4" fill="#63b51a"/><circle cx="6" cy="49.9" r="4" fill="#fdd600"/><circle cx="6" cy="71.9" r="4" fill="#6fd3f7"/></svg>
<div class="t" style="left:1308px;top:626px;font-size:12px;color:#343741;letter-spacing:-0.45px">REJECT</div>
<div class="t" style="left:1308px;top:648px;font-size:12px;color:#343741;letter-spacing:-0.45px">ACCEPT</div>
<div class="t" style="left:1308px;top:670px;font-size:12px;color:#343741">-</div>
<div class="t" style="left:1308px;top:692px;font-size:12px;color:#343741;letter-spacing:0.28px">Total Requests</div>
<div class="t" style="left:1401px;top:626px;font-size:12px;color:#343741">0</div>
<div class="t" style="left:1401px;top:648px;font-size:12px;color:#343741">0</div>
<div class="t" style="left:1401px;top:670px;font-size:12px;color:#343741">0</div>
<div class="t" style="left:1401px;top:692px;font-size:12px;color:#343741">0</div>
<div class="t" style="left:609.5px;top:896px;font-size:12px;font-weight:700;color:#343741;letter-spacing:0.12px">per 10 seconds</div>

<svg class="abs" style="left:0;top:904px" width="8" height="12"><path d="M0,1 Q1,8 6,12 L0,12 Z" fill="#444"/></svg>
<div id="scroll"></div><div id="thumb"></div>
</body></html>
